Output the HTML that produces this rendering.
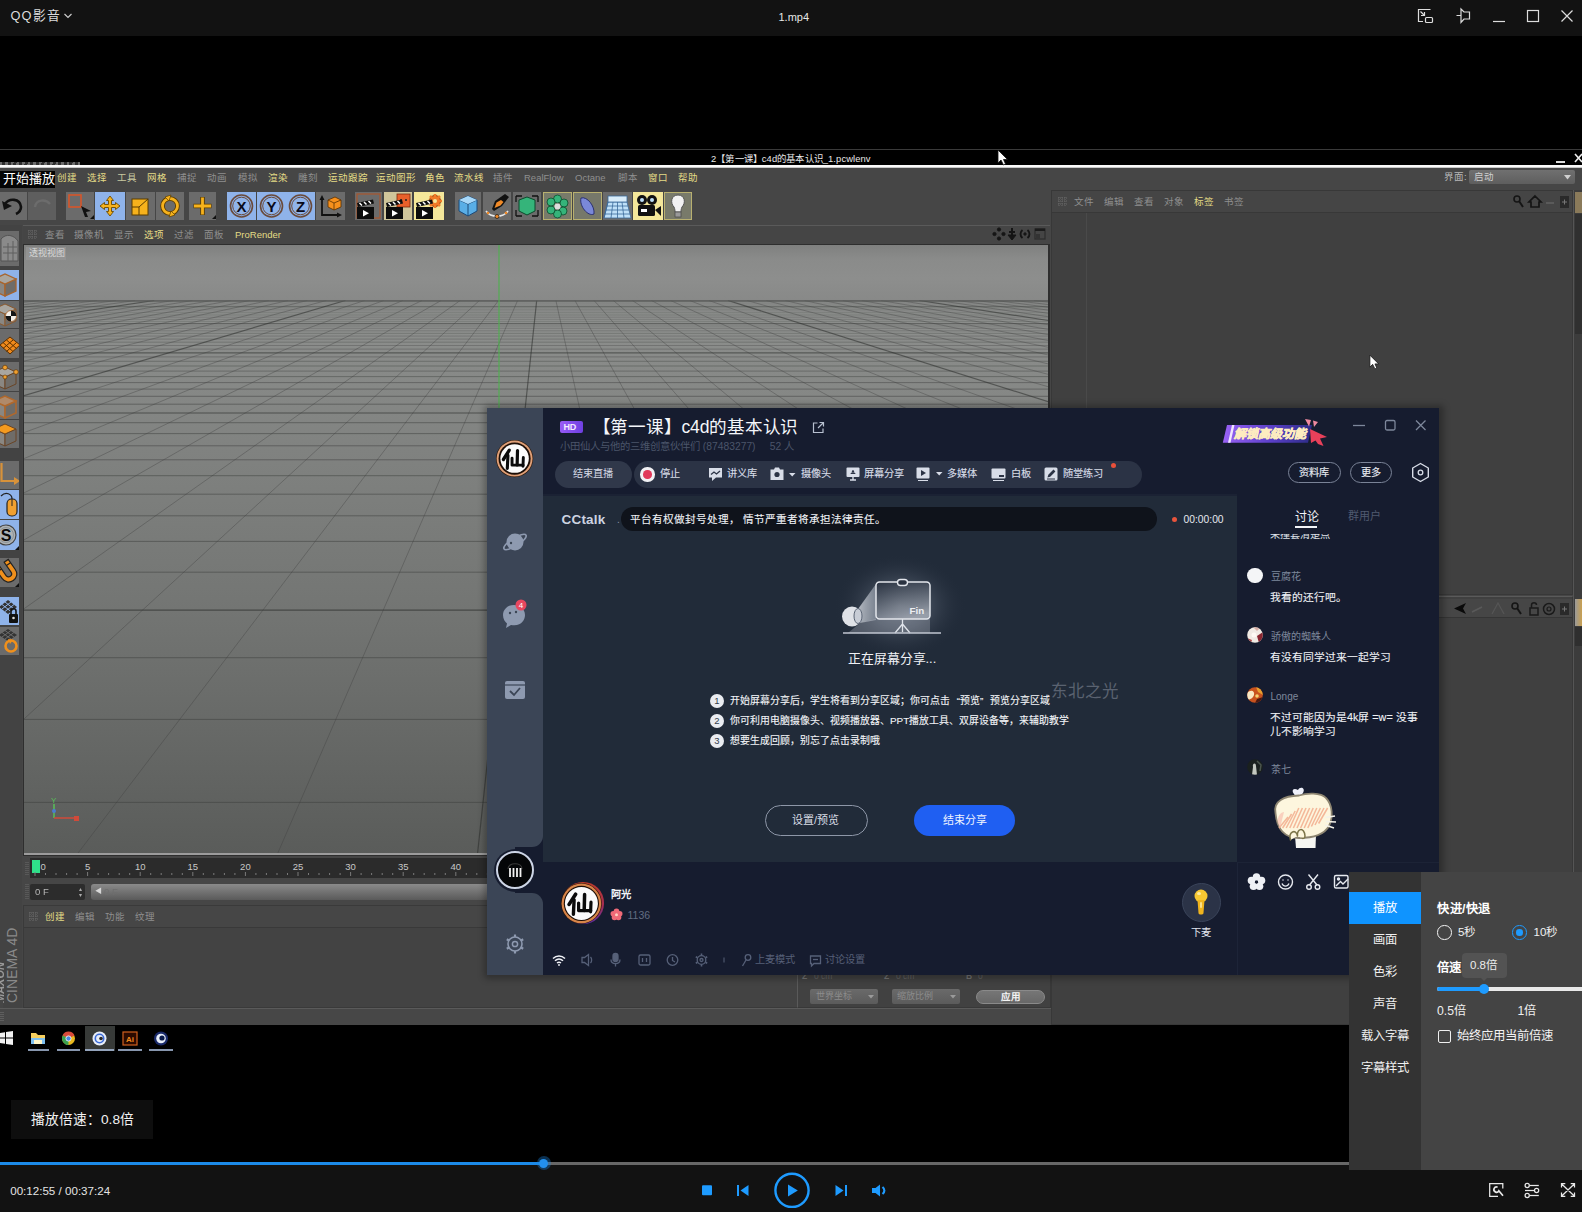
<!DOCTYPE html><html lang="zh-CN"><head><meta charset="utf-8"><title>QQ影音</title><style>
*{box-sizing:border-box;margin:0;padding:0}
html,body{width:1582px;height:1212px;overflow:hidden;background:#000}
body{font-family:"Liberation Sans",sans-serif;position:relative;color:#ddd}
.a{position:absolute}
.t{position:absolute;white-space:nowrap;line-height:1}
</style></head><body>
<div class="a" style="left:0px;top:0px;width:1582px;height:36px;background:#121212"></div>
<div class="t" style="left:10.5px;top:10px;font-size:12.8px;color:#dcdcdc;letter-spacing:1.1px">QQ影音</div>
<svg class="a" style="left:63px;top:12px" width="10" height="8" viewBox="0 0 10 8"><path d="M1.5 2 L5 5.5 L8.5 2" fill="none" stroke="#ccc" stroke-width="1.2"/></svg>
<div class="t" style="left:778.5px;top:12px;font-size:11px;color:#e6e6e6;">1.mp4</div>
<svg class="a" style="left:1410px;top:4px" width="172" height="28" viewBox="1410 4 172 28" fill="none" stroke="#ddd" stroke-width="1.2">
<path d="M1430.5 9.5 H1418.5 V21.5 H1423"/><rect x="1425.5" y="17.500" width="7" height="5" rx="1"/><path d="M1420.500 11.500 L1424.500 15.500 M1424.500 12 V15.500 H1421"/>
<path d="M1456.500 15.500 H1461 M1461 9 V22.500 L1464 19 H1469.500 V12 H1464 Z"/>
<path d="M1493 21.500 H1505"/>
<rect x="1527.500" y="10.500" width="11" height="11"/>
<path d="M1561.500 10.500 L1572.500 21.500 M1572.500 10.500 L1561.500 21.500"/>
</svg>
<div class="a" style="left:0;top:0;width:1582px;height:1212px;filter:blur(.6px)">
<div class="a" style="left:0px;top:148px;width:1582px;height:877px;background:#464646"></div>
<div class="a" style="left:0px;top:148px;width:1582px;height:18px;background:#000"></div>
<div class="a" style="left:0px;top:149px;width:1582px;height:1px;background:#3a3a3a"></div>
<div class="a" style="left:0px;top:164.5px;width:1582px;height:3.5px;background:linear-gradient(#fafafa 65%,#9a9a9a)"></div>
<div class="a" style="left:0px;top:161.5px;width:80px;height:4px;background:repeating-linear-gradient(100deg,rgba(255,255,255,.42) 0 2.500px,rgba(255,255,255,.18) 2.500px 5.500px);filter:blur(.6px)"></div>
<div class="t" style="left:711px;top:153.5px;font-size:9.4px;color:#e8e8e8;letter-spacing:.1px">2【第一课】c4d的基本认识_1.pcwlenv</div>
<div class="a" style="left:1556px;top:161px;width:9px;height:2px;background:#ddd"></div>
<svg class="a" style="left:1574px;top:153px" width="8" height="10"><path d="M1 1L8 9M8 1L1 9" stroke="#eee" stroke-width="1.6"/></svg>
<svg class="a" style="left:997px;top:149px" width="12" height="18" viewBox="0 0 12 18"><path d="M1 1V14L4 11L6.500 16L8.500 15L6.500 10.500H10.500Z" fill="#fff" stroke="#111" stroke-width="0.8"/></svg>
<div class="t" style="left:57px;top:173px;font-size:9.5px;color:#e4dc86;">创建</div>
<div class="t" style="left:87px;top:173px;font-size:9.5px;color:#e4dc86;">选择</div>
<div class="t" style="left:117px;top:173px;font-size:9.5px;color:#c9c9a0;">工具</div>
<div class="t" style="left:147px;top:173px;font-size:9.5px;color:#e4dc86;">网格</div>
<div class="t" style="left:177px;top:173px;font-size:9.5px;color:#8f8f8f;">捕捉</div>
<div class="t" style="left:207px;top:173px;font-size:9.5px;color:#8f8f8f;">动画</div>
<div class="t" style="left:238px;top:173px;font-size:9.5px;color:#8f8f8f;">模拟</div>
<div class="t" style="left:268px;top:173px;font-size:9.5px;color:#e4dc86;">渲染</div>
<div class="t" style="left:298px;top:173px;font-size:9.5px;color:#8f8f8f;">雕刻</div>
<div class="t" style="left:328px;top:173px;font-size:9.5px;color:#e4dc86;">运动跟踪</div>
<div class="t" style="left:376px;top:173px;font-size:9.5px;color:#e4dc86;">运动图形</div>
<div class="t" style="left:425px;top:173px;font-size:9.5px;color:#e4dc86;">角色</div>
<div class="t" style="left:454px;top:173px;font-size:9.5px;color:#e4dc86;">流水线</div>
<div class="t" style="left:493px;top:173px;font-size:9.5px;color:#8f8f8f;">插件</div>
<div class="t" style="left:524px;top:173px;font-size:9.5px;color:#8f8f8f;">RealFlow</div>
<div class="t" style="left:575px;top:173px;font-size:9.5px;color:#8f8f8f;">Octane</div>
<div class="t" style="left:618px;top:173px;font-size:9.5px;color:#8f8f8f;">脚本</div>
<div class="t" style="left:648px;top:173px;font-size:9.5px;color:#e4dc86;">窗口</div>
<div class="t" style="left:678px;top:173px;font-size:9.5px;color:#e4dc86;">帮助</div>
<div class="a" style="left:0px;top:171px;width:55px;height:17px;background:#050505"></div>
<div class="t" style="left:3px;top:172px;font-size:13px;color:#fff;">开始播放</div>
<div class="t" style="left:1444px;top:172px;font-size:9.5px;color:#b8b8b8;">界面:</div>
<div class="a" style="left:1469px;top:170px;width:106px;height:14px;background:linear-gradient(#707070,#5e5e5e);border-radius:2px"></div>
<div class="t" style="left:1474px;top:172px;font-size:9.5px;color:#d0d0d0;">启动</div>
<svg class="a" style="left:1564px;top:175px" width="7" height="5"><path d="M0 0H7L3.500 4.500Z" fill="#d0d0d0"/></svg>
<div class="a" style="left:0px;top:192px;width:27px;height:28px;background:#6b6b6b;overflow:hidden"><svg width="27" height="28" viewBox="0 0 27 28"><path d="M5 12C9 6 20 6 21 15C21 19 18 21 16 22" fill="none" stroke="#111" stroke-width="2.6"/><path d="M2 9L4 18L12 14Z" fill="#111"/></svg></div>
<div class="a" style="left:28px;top:192px;width:28px;height:28px;background:#5e5e5e;overflow:hidden"><svg width="28" height="28" viewBox="0 0 28 28"><path d="M22 12C18 7 8 7 7 15" fill="none" stroke="#6c6c6c" stroke-width="2.4"/></svg></div>
<div class="a" style="left:66px;top:192px;width:28px;height:28px;background:#6b6b6b;overflow:hidden"><svg width="28" height="28" viewBox="0 0 28 28"><rect x="3" y="3" width="12" height="12" fill="none" stroke="#d8562a" stroke-width="1.6"/><path d="M15 14L25 19L20 20L22 25L19 25Z" fill="#111"/><path d="M24 27H28V23Z" fill="#111"/></svg></div>
<div class="a" style="left:95px;top:192px;width:30px;height:28px;background:#8fb3ea;overflow:hidden"><svg width="30" height="28" viewBox="0 0 30 28"><g transform="translate(1,0)"><path d="M14 4L17.500 8.500H15.500V12.500H19.500V10.500L24 14L19.500 17.500V15.500H15.500V19.500H17.500L14 24L10.500 19.500H12.500V15.500H8.500V17.500L4 14L8.500 10.500V12.500H12.500V8.500H10.500Z" fill="#f7b21c" stroke="#6a4a00" stroke-width="0.9"/></g></svg></div>
<div class="a" style="left:126px;top:192px;width:29px;height:28px;background:#6b6b6b;overflow:hidden"><svg width="29" height="28" viewBox="0 0 29 28"><rect x="6" y="7" width="16" height="16" fill="#f7b21c" stroke="#5a3c00" stroke-width="1"/><path d="M6 15H13V23M13 15L22 7" stroke="#5a3c00" stroke-width="1" fill="none"/></svg></div>
<div class="a" style="left:156px;top:192px;width:28px;height:28px;background:#6b6b6b;overflow:hidden"><svg width="28" height="28" viewBox="0 0 28 28"><circle cx="14" cy="14" r="7.500" fill="none" stroke="#5a3c00" stroke-width="4.600"/><circle cx="14" cy="14" r="7.500" fill="none" stroke="#f7b21c" stroke-width="2.800"/><path d="M9 5L15 3L13 9Z M19 23L13 25L15 19Z" fill="#f7b21c" stroke="#5a3c00" stroke-width=".7"/></svg></div>
<div class="a" style="left:189px;top:192px;width:27px;height:28px;background:#6b6b6b;overflow:hidden"><svg width="27" height="28" viewBox="0 0 27 28"><path d="M13.500 5V23M4.500 14H22.500" stroke="#5a3c00" stroke-width="4.600"/><path d="M13.500 5.500V22.500M5 14H22" stroke="#f7b21c" stroke-width="2.800"/><path d="M23 27H27V23Z" fill="#111"/></svg></div>
<div class="a" style="left:227px;top:192px;width:29px;height:28px;background:#8fb3ea;overflow:hidden"><svg width="29" height="28" viewBox="0 0 29 28"><circle cx="14.500" cy="14" r="11" fill="none" stroke="#6a4a3a" stroke-width="1.6"/><circle cx="14.500" cy="14" r="8.800" fill="none" stroke="#6a4a3a" stroke-width="1"/><text x="14.500" y="19.500" text-anchor="middle" font-family="Liberation Sans, sans-serif" font-weight="bold" font-size="15" fill="#0a0a1a">X</text></svg></div>
<div class="a" style="left:256.5px;top:192px;width:29px;height:28px;background:#8fb3ea;overflow:hidden"><svg width="29" height="28" viewBox="0 0 29 28"><circle cx="14.500" cy="14" r="11" fill="none" stroke="#6a4a3a" stroke-width="1.6"/><circle cx="14.500" cy="14" r="8.800" fill="none" stroke="#6a4a3a" stroke-width="1"/><text x="14.500" y="19.500" text-anchor="middle" font-family="Liberation Sans, sans-serif" font-weight="bold" font-size="15" fill="#0a0a1a">Y</text></svg></div>
<div class="a" style="left:286px;top:192px;width:29px;height:28px;background:#8fb3ea;overflow:hidden"><svg width="29" height="28" viewBox="0 0 29 28"><circle cx="14.500" cy="14" r="11" fill="none" stroke="#6a4a3a" stroke-width="1.6"/><circle cx="14.500" cy="14" r="8.800" fill="none" stroke="#6a4a3a" stroke-width="1"/><text x="14.500" y="19.500" text-anchor="middle" font-family="Liberation Sans, sans-serif" font-weight="bold" font-size="15" fill="#0a0a1a">Z</text></svg></div>
<div class="a" style="left:316px;top:192px;width:29px;height:28px;background:#6b6b6b;overflow:hidden"><svg width="29" height="28" viewBox="0 0 29 28"><path d="M6 6V23H23" fill="none" stroke="#111" stroke-width="1.800"/><path d="M6 3L3.500 8H8.500ZM26 23L21 20.500V25.500Z" fill="#111"/><path d="M12 8L19 5L25 8V15L18 18L12 15Z" fill="#f7901c" stroke="#5a3000" stroke-width=".8"/><path d="M12 8L18 11L25 8M18 11V18" fill="none" stroke="#5a3000" stroke-width=".8"/></svg></div>
<div class="a" style="left:355px;top:192px;width:27px;height:28px;background:#6b6b6b;overflow:hidden"><svg width="27" height="28" viewBox="0 0 27 28"><rect x="2" y="2" width="23" height="24" fill="none" stroke="#a9562e" stroke-width="1.2"/><rect x="2" y="15" width="17" height="12" fill="#0c0c0c"/><path d="M2 11L18 7.500L19 11.500L3 15Z" fill="#0c0c0c"/><path d="M4.500 11L7 13.500M9 10L11.500 12.500M13.500 9L16 11.500" stroke="#fff" stroke-width="1.500"/><path d="M8 18V24.500L14 21.200Z" fill="#fff"/></svg></div>
<div class="a" style="left:384px;top:192px;width:28px;height:28px;background:#cfc59a;overflow:hidden"><svg width="28" height="28" viewBox="0 0 28 28"><rect x="13" y="2" width="13" height="13" fill="#e8602a" stroke="#7a2a0a" stroke-width=".8"/><circle cx="17" cy="8" r="1" fill="#222"/><circle cx="22" cy="8" r="1" fill="#222"/><rect x="2" y="15" width="17" height="12" fill="#0c0c0c"/><path d="M2 11L18 7.500L19 11.500L3 15Z" fill="#0c0c0c"/><path d="M4.500 11L7 13.500M9 10L11.500 12.500M13.500 9L16 11.500" stroke="#fff" stroke-width="1.500"/><path d="M8 18V24.500L14 21.200Z" fill="#fff"/></svg></div>
<div class="a" style="left:414px;top:192px;width:30px;height:28px;background:#f4e79a;overflow:hidden"><svg width="30" height="28" viewBox="0 0 30 28"><circle cx="21" cy="9" r="5.500" fill="#f07a28" stroke="#7a3000" stroke-width="1"/><path d="M21 2V16M14 9H28M16 4L26 14M26 4L16 14" stroke="#f07a28" stroke-width="2.600"/><circle cx="21" cy="9" r="2" fill="#f4e79a"/><rect x="2" y="15" width="17" height="12" fill="#0c0c0c"/><path d="M2 11L18 7.500L19 11.500L3 15Z" fill="#0c0c0c"/><path d="M4.500 11L7 13.500M9 10L11.500 12.500M13.500 9L16 11.500" stroke="#fff" stroke-width="1.500"/><path d="M8 18V24.500L14 21.200Z" fill="#fff"/></svg></div>
<div class="a" style="left:455px;top:192px;width:26px;height:28px;background:#6b6b6b;overflow:hidden"><svg width="26" height="28" viewBox="0 0 26 28"><path d="M13 4L22 8V19L13 24L4 19V8Z" fill="#59aee6" stroke="#1d4a78" stroke-width="1"/><path d="M4 8L13 12L22 8M13 12V24" fill="none" stroke="#1d4a78" stroke-width="1"/><path d="M4 8L13 4L22 8L13 12Z" fill="#a8d8f8"/></svg></div>
<div class="a" style="left:483px;top:192px;width:28px;height:28px;background:#6b6b6b;overflow:hidden"><svg width="28" height="28" viewBox="0 0 28 28"><path d="M9 17L12 9L22 2L26 5L19 14L11 19Z" fill="#111"/><path d="M11.500 16L13.500 10.500L18 8L20.500 10L17.500 13.500Z" fill="#f08a28"/><path d="M3 19C8 26 20 26 25 19" fill="none" stroke="#e8e8e8" stroke-width="1.600"/><circle cx="14" cy="24.500" r="2" fill="#f08a28" stroke="#111" stroke-width=".7"/><circle cx="5" cy="21" r="1.300" fill="#f08a28"/><circle cx="23" cy="21" r="1.300" fill="#f08a28"/></svg></div>
<div class="a" style="left:513px;top:192px;width:28px;height:28px;background:#6b6b6b;overflow:hidden"><svg width="28" height="28" viewBox="0 0 28 28"><path d="M14 5L22 8V19L14 23L6 19V8Z" fill="#35b47a" stroke="#0c4a2c" stroke-width="1"/><path d="M3 4V10M3 4H9M25 4V10M25 4H19M3 24V18M3 24H9M25 24V18M25 24H19" stroke="#111" stroke-width="1.300" fill="none"/></svg></div>
<div class="a" style="left:543px;top:192px;width:29px;height:28px;background:#787a6a;overflow:hidden"><svg width="29" height="28" viewBox="0 0 29 28"><rect x=".5" y=".5" width="28" height="27" fill="none" stroke="#b8b070" stroke-width="1"/><g fill="#35b47a" stroke="#0c4a2c" stroke-width=".8"><circle cx="14.500" cy="7" r="4"/><circle cx="21" cy="11" r="4"/><circle cx="20" cy="19" r="4"/><circle cx="14.500" cy="22" r="4"/><circle cx="8" cy="18" r="4"/><circle cx="8" cy="10" r="4"/></g><circle cx="14.500" cy="14.500" r="3" fill="#ddd"/></svg></div>
<div class="a" style="left:573px;top:192px;width:29px;height:28px;background:#76786a;overflow:hidden"><svg width="29" height="28" viewBox="0 0 29 28"><rect x=".5" y=".5" width="28" height="27" fill="none" stroke="#b8b070" stroke-width="1"/><path d="M8 6C14 4 22 14 21 22C15 25 6 14 8 6Z" fill="#7a88d8" stroke="#2a3070" stroke-width="1"/></svg></div>
<div class="a" style="left:603px;top:192px;width:29px;height:28px;background:#6b6b6b;overflow:hidden"><svg width="29" height="28" viewBox="0 0 29 28"><path d="M5 10H24L28 26H1Z" fill="#bfe0f8" stroke="#3a6a9a" stroke-width=".8"/><path d="M1 26L5 10M8 26L10 10M14.500 26V10M21 26L19 10M3 18H26M4 14H25M2 22H27" stroke="#3a6a9a" stroke-width=".8" fill="none"/><rect x="5" y="4" width="19" height="6" fill="#d8ecfa" stroke="#3a6a9a" stroke-width=".8"/></svg></div>
<div class="a" style="left:633px;top:192px;width:30px;height:28px;background:#f4e79a;overflow:hidden"><svg width="30" height="28" viewBox="0 0 30 28"><circle cx="9" cy="8" r="5" fill="#111"/><circle cx="19" cy="8" r="5" fill="#111"/><circle cx="9" cy="8" r="2" fill="#bfe0f8"/><circle cx="19" cy="8" r="2" fill="#bfe0f8"/><rect x="5" y="13" width="17" height="11" rx="1.500" fill="#111"/><path d="M22 18L28 14V24Z" fill="#111"/><rect x="8" y="17" width="6" height="3" fill="#fff"/></svg></div>
<div class="a" style="left:664px;top:192px;width:28px;height:28px;background:#787a6a;overflow:hidden"><svg width="28" height="28" viewBox="0 0 28 28"><rect x=".5" y=".5" width="27" height="27" fill="none" stroke="#b8b070" stroke-width="1"/><path d="M14 3C7 3 6 11 10 15C11 17 11 19 11 20H17C17 19 17 17 18 15C22 11 21 3 14 3Z" fill="#f2f2f2" stroke="#555" stroke-width="1"/><rect x="11" y="20" width="6" height="5" fill="#999" stroke="#444" stroke-width=".7"/></svg></div>
<div class="a" style="left:0px;top:225px;width:22px;height:800px;background:#434343"></div>
<div class="a" style="left:0px;top:231px;width:19px;height:35px;background:#6b6b6b;overflow:hidden"><svg width="19" height="35" viewBox="0 0 19 35"><path d="M1 8C6 2 14 4 18 10V30H1Z" fill="#8a8a8a" stroke="#555" stroke-width="1"/><path d="M3 22H17M3 16H17M8 12V30M13 10V30" stroke="#5e5e5e" stroke-width="1"/></svg></div>
<div class="a" style="left:0px;top:270px;width:19px;height:30px;background:#8fb3ea;overflow:hidden"><svg width="19" height="30" viewBox="0 0 19 30"><path d="M-6 9L5 14V26L-6 21Z" fill="#8a8782" stroke="#a8642c" stroke-width="1.3"/><path d="M5 14L16 9V21L5 26Z" fill="#6f6c68" stroke="#a8642c" stroke-width="1.3"/><path d="M-6 9L5 4L16 9L5 14Z" fill="#a9a6a0" stroke="#a8642c" stroke-width="1.3"/></svg></div>
<div class="a" style="left:0px;top:301px;width:19px;height:27px;background:#6b6b6b;overflow:hidden"><svg width="19" height="27" viewBox="0 0 19 27"><path d="M-6 8L5 13V25L-6 20Z" fill="#8a8782" stroke="#8a5a30" stroke-width="1"/><path d="M5 13L16 8V20L5 25Z" fill="#6f6c68" stroke="#8a5a30" stroke-width="1"/><path d="M-6 8L5 3L16 8L5 13Z" fill="#a9a6a0" stroke="#8a5a30" stroke-width="1"/><circle cx="11" cy="15" r="5.500" fill="#f4f0ea" stroke="#a8642c" stroke-width=".8"/><path d="M11 15V9.500A5.500 5.500 0 0 1 16.500 15ZM11 15V20.500A5.500 5.500 0 0 1 5.500 15Z" fill="#151515"/></svg></div>
<div class="a" style="left:0px;top:329px;width:19px;height:29px;background:#6b6b6b;overflow:hidden"><svg width="19" height="29" viewBox="0 0 19 29"><path d="M0 16L10 8L20 16L10 25Z" fill="#f08a1c" stroke="#5a3000" stroke-width="1"/><path d="M3 13.500L13 22.500M6.500 11L16.500 19.500M16.500 13.500L6.500 22.500M13 11L3 19.500" stroke="#5a3000" stroke-width="1"/></svg></div>
<div class="a" style="left:0px;top:362px;width:19px;height:29px;background:#6b6b6b;overflow:hidden"><svg width="19" height="29" viewBox="0 0 19 29"><path d="M-6 10L5 15V27L-6 22Z" fill="#8a8782" stroke="#6a4526" stroke-width="1"/><path d="M5 15L16 10V22L5 27Z" fill="#6f6c68" stroke="#6a4526" stroke-width="1"/><path d="M-6 10L5 5L16 10L5 15Z" fill="#a9a6a0" stroke="#6a4526" stroke-width="1"/><circle cx="5" cy="5.500" r="2.300" fill="#f0a030" stroke="#5a3000" stroke-width=".6"/><circle cx="16" cy="10" r="2.300" fill="#f0a030" stroke="#5a3000" stroke-width=".6"/><circle cx="5" cy="15" r="2" fill="#f0a030" stroke="#5a3000" stroke-width=".6"/></svg></div>
<div class="a" style="left:0px;top:392px;width:19px;height:27px;background:#6b6b6b;overflow:hidden"><svg width="19" height="27" viewBox="0 0 19 27"><path d="M-6 9L5 14V26L-6 21Z" fill="#8a8782" stroke="#b0682c" stroke-width="1.5"/><path d="M5 14L16 9V21L5 26Z" fill="#6f6c68" stroke="#b0682c" stroke-width="1.5"/><path d="M-6 9L5 4L16 9L5 14Z" fill="#b08a6a" stroke="#b0682c" stroke-width="1.5"/></svg></div>
<div class="a" style="left:0px;top:420px;width:19px;height:28px;background:#6b6b6b;overflow:hidden"><svg width="19" height="28" viewBox="0 0 19 28"><path d="M-6 9L5 14V26L-6 21Z" fill="#8a8782" stroke="#6a4526" stroke-width="1"/><path d="M5 14L16 9V21L5 26Z" fill="#6f6c68" stroke="#6a4526" stroke-width="1"/><path d="M-6 9L5 4L16 9L5 14Z" fill="#f59a1e" stroke="#6a4526" stroke-width="1"/></svg></div>
<div class="a" style="left:0px;top:461px;width:19px;height:28px;background:#6b6b6b;overflow:hidden"><svg width="19" height="28" viewBox="0 0 19 28"><path d="M1.500 2V20H15" fill="none" stroke="#d8923a" stroke-width="2.200"/><path d="M14 16L20 20L14 24Z" fill="#d8923a"/></svg></div>
<div class="a" style="left:0px;top:490px;width:19px;height:29px;background:#8fb3ea;overflow:hidden"><svg width="19" height="29" viewBox="0 0 19 29"><path d="M1 6C6 1 12 4 12 9" fill="none" stroke="#222" stroke-width="1.300"/><rect x="7" y="9" width="10" height="17" rx="4.500" fill="#f0a030" stroke="#222" stroke-width="1.200"/><path d="M12 9V16" stroke="#222" stroke-width="1"/></svg></div>
<div class="a" style="left:0px;top:520px;width:19px;height:30px;background:#8fb3ea;overflow:hidden"><svg width="19" height="30" viewBox="0 0 19 30"><circle cx="6" cy="15" r="10" fill="#aeb2b4" stroke="#444" stroke-width="1.200"/><circle cx="6" cy="15" r="7.500" fill="none" stroke="#8a9298" stroke-width="1"/><text x="6" y="21" text-anchor="middle" font-family="Liberation Sans, sans-serif" font-weight="bold" font-size="16" fill="#0a0a0a">S</text><path d="M15 30H19V26Z" fill="#111"/></svg></div>
<div class="a" style="left:0px;top:558px;width:19px;height:29px;background:#6b6b6b;overflow:hidden"><svg width="19" height="29" viewBox="0 0 19 29"><g transform="rotate(-35 8 15)"><path d="M0 4V16C0 27 16 27 16 16V4H11V16C11 20 5 20 5 16V4Z" fill="#f0901c" stroke="#222" stroke-width="1.200"/><path d="M0 8H5M11 8H16" stroke="#222" stroke-width="1.200"/></g><path d="M15 29H19V25Z" fill="#111"/></svg></div>
<div class="a" style="left:0px;top:597px;width:19px;height:28px;background:#8fb3ea;overflow:hidden"><svg width="19" height="28" viewBox="0 0 19 28"><path d="M-1 10L8 3L17 10L8 17Z" fill="#333"/><path d="M2 7.500L11 14.500M5 5L14 12M14 7.500L5 14.500M11 5L2 12" stroke="#8fb3ea" stroke-width="1"/><rect x="9" y="17" width="9" height="9" rx="1" fill="#111"/><path d="M11 17V14C11 11 16 11 16 14V17" fill="none" stroke="#111" stroke-width="1.600"/><circle cx="13.500" cy="21" r="1.300" fill="#ddd"/></svg></div>
<div class="a" style="left:0px;top:627px;width:19px;height:28px;background:#6b6b6b;overflow:hidden"><svg width="19" height="28" viewBox="0 0 19 28"><path d="M-1 8L8 2L17 8L8 14Z" fill="#333"/><path d="M2 5.500L11 12M5 3.500L14 10M14 5.500L5 12M11 3.500L2 10" stroke="#6b6b6b" stroke-width="1"/><circle cx="11" cy="19" r="5.500" fill="none" stroke="#f0901c" stroke-width="2.600"/><path d="M8 12L13 13L10 17Z" fill="#f0901c"/></svg></div>
<div class="t" style="left:5px;top:1003px;transform-origin:0 0;transform:rotate(-90deg);font-size:14px;color:#8a8a8a;letter-spacing:0px">CINEMA 4D</div>
<div class="t" style="left:-5px;top:1003px;transform-origin:0 0;transform:rotate(-90deg);font-size:11px;font-weight:bold;font-style:italic;color:#9a9a9a">MAXON</div>
<div class="a" style="left:0px;top:1000px;width:3px;height:24px;background:#464646"></div>
<div class="a" style="left:23px;top:224.5px;width:1027px;height:20.5px;background:#454545;border-top:1px solid #5a5a5a"></div>
<svg class="a" style="left:28px;top:230px" width="10" height="10"><path d="M1 0V10M4 0V10M7 0V10M0 1H10M0 4H10M0 7H10" stroke="#6a6a6a" stroke-width="1" stroke-dasharray="1 1"/></svg>
<div class="t" style="left:45px;top:230px;font-size:9.5px;color:#8f8f8f;">查看</div>
<div class="t" style="left:74px;top:230px;font-size:9.5px;color:#8f8f8f;">摄像机</div>
<div class="t" style="left:114px;top:230px;font-size:9.5px;color:#8f8f8f;">显示</div>
<div class="t" style="left:144px;top:230px;font-size:9.5px;color:#e4dc86;">选项</div>
<div class="t" style="left:174px;top:230px;font-size:9.5px;color:#8f8f8f;">过滤</div>
<div class="t" style="left:204px;top:230px;font-size:9.5px;color:#8f8f8f;">面板</div>
<div class="t" style="left:235px;top:230px;font-size:9.5px;color:#e4dc86;">ProRender</div>
<svg class="a" style="left:992px;top:227px" width="56" height="14" viewBox="0 0 56 14"><g fill="#151515" stroke="#151515"><circle cx="7" cy="2.500" r="1.600"/><circle cx="7" cy="11.500" r="1.600"/><circle cx="2.500" cy="7" r="1.600"/><circle cx="11.500" cy="7" r="1.600"/><path d="M20 1V9M17 5H23" stroke-width="2" fill="none"/><path d="M20 13L16 8H24Z"/><path d="M30.500 3A5 5 0 0 0 30.500 11M35.500 3A5 5 0 0 1 35.500 11" fill="none" stroke-width="1.900"/><circle cx="33" cy="7" r="1.200"/><rect x="43" y="2" width="10" height="10" fill="none" stroke="#2e2e2e" stroke-width="1.300"/><rect x="43" y="1.500" width="10" height="2.500" fill="#1c1c1c" stroke="none"/><rect x="44" y="7" width="4" height="5" fill="#333" stroke="none"/></g></svg>
<div class="a" style="left:23px;top:244px;width:1027px;height:612px;background:#2e2e2e"></div>
<svg class="a" style="left:24px;top:245px" width="1024" height="609" viewBox="0 0 1024 609">
<defs><linearGradient id="sky" x1="0" y1="0" x2="0" y2="1"><stop offset="0" stop-color="#7f807f"/><stop offset="0.25" stop-color="#8a8b8a"/><stop offset="0.6" stop-color="#8d8e8d"/><stop offset="1" stop-color="#888988"/></linearGradient><linearGradient id="gnd" x1="0" y1="0" x2="0" y2="1"><stop offset="0" stop-color="#8f918f"/><stop offset="0.12" stop-color="#888a88"/><stop offset="0.27" stop-color="#808280"/><stop offset="0.54" stop-color="#747674"/><stop offset="0.81" stop-color="#656765"/><stop offset="1" stop-color="#5a5c5a"/></linearGradient><clipPath id="gc"><rect x="0" y="55.5" width="1024" height="553.5"/></clipPath></defs>
<rect x="0" y="0" width="1024" height="55.5" fill="url(#sky)"/>
<rect x="0" y="55.5" width="1024" height="553.5" fill="url(#gnd)"/>
<g clip-path="url(#gc)" fill="none">
<path d="M0 557.4H1024" stroke="#3c3e3c" stroke-opacity="0.50" stroke-width="1"/>
<path d="M0 474.4H1024" stroke="#3c3e3c" stroke-opacity="0.50" stroke-width="1"/>
<path d="M0 412.7H1024" stroke="#3c3e3c" stroke-opacity="0.50" stroke-width="1"/>
<path d="M0 327.2H1024" stroke="#3c3e3c" stroke-opacity="0.50" stroke-width="1"/>
<path d="M0 296.4H1024" stroke="#3c3e3c" stroke-opacity="0.50" stroke-width="1"/>
<path d="M0 270.8H1024" stroke="#3c3e3c" stroke-opacity="0.50" stroke-width="1"/>
<path d="M0 249.2H1024" stroke="#3c3e3c" stroke-opacity="0.50" stroke-width="1"/>
<path d="M0 230.7H1024" stroke="#3c3e3c" stroke-opacity="0.50" stroke-width="1"/>
<path d="M0 214.8H1024" stroke="#3c3e3c" stroke-opacity="0.50" stroke-width="1"/>
<path d="M0 200.8H1024" stroke="#3c3e3c" stroke-opacity="0.50" stroke-width="1"/>
<path d="M0 188.6H1024" stroke="#3c3e3c" stroke-opacity="0.50" stroke-width="1"/>
<path d="M0 177.7H1024" stroke="#3c3e3c" stroke-opacity="0.50" stroke-width="1"/>
<path d="M0 159.2H1024" stroke="#3c3e3c" stroke-opacity="0.50" stroke-width="1"/>
<path d="M0 151.3H1024" stroke="#3c3e3c" stroke-opacity="0.50" stroke-width="1"/>
<path d="M0 144.1H1024" stroke="#3c3e3c" stroke-opacity="0.48" stroke-width="1"/>
<path d="M0 137.6H1024" stroke="#3c3e3c" stroke-opacity="0.46" stroke-width="1"/>
<path d="M0 131.6H1024" stroke="#3c3e3c" stroke-opacity="0.43" stroke-width="1"/>
<path d="M0 126.1H1024" stroke="#3c3e3c" stroke-opacity="0.41" stroke-width="1"/>
<path d="M0 121.0H1024" stroke="#3c3e3c" stroke-opacity="0.39" stroke-width="1"/>
<path d="M0 116.3H1024" stroke="#3c3e3c" stroke-opacity="0.37" stroke-width="1"/>
<path d="M0 111.9H1024" stroke="#3c3e3c" stroke-opacity="0.36" stroke-width="1"/>
<path d="M0 104.1H1024" stroke="#3c3e3c" stroke-opacity="0.33" stroke-width="1"/>
<path d="M0 100.5H1024" stroke="#3c3e3c" stroke-opacity="0.31" stroke-width="1"/>
<path d="M0 97.2H1024" stroke="#3c3e3c" stroke-opacity="0.30" stroke-width="1"/>
<path d="M0 94.1H1024" stroke="#3c3e3c" stroke-opacity="0.29" stroke-width="1"/>
<path d="M0 91.1H1024" stroke="#3c3e3c" stroke-opacity="0.28" stroke-width="1"/>
<path d="M0 88.4H1024" stroke="#3c3e3c" stroke-opacity="0.27" stroke-width="1"/>
<path d="M0 85.8H1024" stroke="#3c3e3c" stroke-opacity="0.26" stroke-width="1"/>
<path d="M0 83.3H1024" stroke="#3c3e3c" stroke-opacity="0.25" stroke-width="1"/>
<path d="M0 81.0H1024" stroke="#3c3e3c" stroke-opacity="0.24" stroke-width="1"/>
<path d="M0 76.6H1024" stroke="#3c3e3c" stroke-opacity="0.22" stroke-width="1"/>
<path d="M0 74.6H1024" stroke="#3c3e3c" stroke-opacity="0.21" stroke-width="1"/>
<path d="M0 72.7H1024" stroke="#3c3e3c" stroke-opacity="0.21" stroke-width="1"/>
<path d="M0 70.9H1024" stroke="#3c3e3c" stroke-opacity="0.20" stroke-width="1"/>
<path d="M0 69.2H1024" stroke="#3c3e3c" stroke-opacity="0.19" stroke-width="1"/>
<path d="M0 67.5H1024" stroke="#3c3e3c" stroke-opacity="0.19" stroke-width="1"/>
<path d="M0 65.9H1024" stroke="#3c3e3c" stroke-opacity="0.18" stroke-width="1"/>
<path d="M0 64.4H1024" stroke="#3c3e3c" stroke-opacity="0.17" stroke-width="1"/>
<path d="M0 63.0H1024" stroke="#3c3e3c" stroke-opacity="0.17" stroke-width="1"/>
<path d="M0 60.2H1024" stroke="#3c3e3c" stroke-opacity="0.16" stroke-width="1"/>
<path d="M0 58.9H1024" stroke="#3c3e3c" stroke-opacity="0.15" stroke-width="1"/>
<path d="M0 57.7H1024" stroke="#3c3e3c" stroke-opacity="0.15" stroke-width="1"/>
<path d="M0 56.5H1024" stroke="#3c3e3c" stroke-opacity="0.14" stroke-width="1"/>
<path d="M0 365.1H1024" stroke="#2a2c2a" stroke-opacity="0.60" stroke-width="1.2"/>
<path d="M0 168.0H1024" stroke="#2a2c2a" stroke-opacity="0.60" stroke-width="1.2"/>
<path d="M0 107.8H1024" stroke="#2a2c2a" stroke-opacity="0.54" stroke-width="1.2"/>
<path d="M0 78.7H1024" stroke="#2a2c2a" stroke-opacity="0.43" stroke-width="1.2"/>
<path d="M0 61.6H1024" stroke="#2a2c2a" stroke-opacity="0.36" stroke-width="1.2"/>
<path d="M15.4 55.5L-4749.7 609" stroke="#3c3e3c" stroke-opacity="0.36" stroke-width="1"/>
<path d="M34.5 55.5L-4549.6 609" stroke="#3c3e3c" stroke-opacity="0.36" stroke-width="1"/>
<path d="M53.6 55.5L-4349.5 609" stroke="#3c3e3c" stroke-opacity="0.36" stroke-width="1"/>
<path d="M72.8 55.5L-4149.3 609" stroke="#3c3e3c" stroke-opacity="0.36" stroke-width="1"/>
<path d="M91.9 55.5L-3949.2 609" stroke="#3c3e3c" stroke-opacity="0.36" stroke-width="1"/>
<path d="M111.0 55.5L-3749.1 609" stroke="#3c3e3c" stroke-opacity="0.36" stroke-width="1"/>
<path d="M130.2 55.5L-3549.0 609" stroke="#2a2c2a" stroke-opacity="0.55" stroke-width="1.2"/>
<path d="M149.3 55.5L-3348.8 609" stroke="#3c3e3c" stroke-opacity="0.36" stroke-width="1"/>
<path d="M168.4 55.5L-3148.7 609" stroke="#3c3e3c" stroke-opacity="0.36" stroke-width="1"/>
<path d="M187.5 55.5L-2948.6 609" stroke="#3c3e3c" stroke-opacity="0.36" stroke-width="1"/>
<path d="M206.7 55.5L-2748.5 609" stroke="#3c3e3c" stroke-opacity="0.36" stroke-width="1"/>
<path d="M225.8 55.5L-2548.3 609" stroke="#3c3e3c" stroke-opacity="0.36" stroke-width="1"/>
<path d="M244.9 55.5L-2348.2 609" stroke="#3c3e3c" stroke-opacity="0.36" stroke-width="1"/>
<path d="M264.1 55.5L-2148.1 609" stroke="#3c3e3c" stroke-opacity="0.36" stroke-width="1"/>
<path d="M283.2 55.5L-1948.0 609" stroke="#3c3e3c" stroke-opacity="0.36" stroke-width="1"/>
<path d="M302.3 55.5L-1747.8 609" stroke="#3c3e3c" stroke-opacity="0.36" stroke-width="1"/>
<path d="M321.4 55.5L-1547.7 609" stroke="#2a2c2a" stroke-opacity="0.55" stroke-width="1.2"/>
<path d="M340.6 55.5L-1347.6 609" stroke="#3c3e3c" stroke-opacity="0.36" stroke-width="1"/>
<path d="M359.7 55.5L-1147.5 609" stroke="#3c3e3c" stroke-opacity="0.36" stroke-width="1"/>
<path d="M378.8 55.5L-947.4 609" stroke="#3c3e3c" stroke-opacity="0.36" stroke-width="1"/>
<path d="M398.0 55.5L-747.2 609" stroke="#3c3e3c" stroke-opacity="0.36" stroke-width="1"/>
<path d="M417.1 55.5L-547.1 609" stroke="#3c3e3c" stroke-opacity="0.36" stroke-width="1"/>
<path d="M436.2 55.5L-347.0 609" stroke="#3c3e3c" stroke-opacity="0.36" stroke-width="1"/>
<path d="M455.4 55.5L-146.9 609" stroke="#3c3e3c" stroke-opacity="0.36" stroke-width="1"/>
<path d="M474.5 55.5L53.3 609" stroke="#3c3e3c" stroke-opacity="0.36" stroke-width="1"/>
<path d="M493.6 55.5L253.4 609" stroke="#3c3e3c" stroke-opacity="0.36" stroke-width="1"/>
<path d="M512.7 55.5L453.5 609" stroke="#2a2c2a" stroke-opacity="0.55" stroke-width="1.2"/>
<path d="M531.9 55.5L653.6 609" stroke="#3c3e3c" stroke-opacity="0.36" stroke-width="1"/>
<path d="M551.0 55.5L853.8 609" stroke="#3c3e3c" stroke-opacity="0.36" stroke-width="1"/>
<path d="M570.1 55.5L1053.9 609" stroke="#3c3e3c" stroke-opacity="0.36" stroke-width="1"/>
<path d="M589.3 55.5L1254.0 609" stroke="#3c3e3c" stroke-opacity="0.36" stroke-width="1"/>
<path d="M608.4 55.5L1454.1 609" stroke="#3c3e3c" stroke-opacity="0.36" stroke-width="1"/>
<path d="M627.5 55.5L1654.3 609" stroke="#3c3e3c" stroke-opacity="0.36" stroke-width="1"/>
<path d="M646.6 55.5L1854.4 609" stroke="#3c3e3c" stroke-opacity="0.36" stroke-width="1"/>
<path d="M665.8 55.5L2054.5 609" stroke="#3c3e3c" stroke-opacity="0.36" stroke-width="1"/>
<path d="M684.9 55.5L2254.6 609" stroke="#3c3e3c" stroke-opacity="0.36" stroke-width="1"/>
<path d="M704.0 55.5L2454.8 609" stroke="#2a2c2a" stroke-opacity="0.55" stroke-width="1.2"/>
<path d="M723.2 55.5L2654.9 609" stroke="#3c3e3c" stroke-opacity="0.36" stroke-width="1"/>
<path d="M742.3 55.5L2855.0 609" stroke="#3c3e3c" stroke-opacity="0.36" stroke-width="1"/>
<path d="M761.4 55.5L3055.1 609" stroke="#3c3e3c" stroke-opacity="0.36" stroke-width="1"/>
<path d="M780.6 55.5L3255.3 609" stroke="#3c3e3c" stroke-opacity="0.36" stroke-width="1"/>
<path d="M799.7 55.5L3455.4 609" stroke="#3c3e3c" stroke-opacity="0.36" stroke-width="1"/>
<path d="M818.8 55.5L3655.5 609" stroke="#3c3e3c" stroke-opacity="0.36" stroke-width="1"/>
<path d="M837.9 55.5L3855.6 609" stroke="#3c3e3c" stroke-opacity="0.36" stroke-width="1"/>
<path d="M857.1 55.5L4055.7 609" stroke="#3c3e3c" stroke-opacity="0.36" stroke-width="1"/>
<path d="M876.2 55.5L4255.9 609" stroke="#3c3e3c" stroke-opacity="0.36" stroke-width="1"/>
<path d="M895.3 55.5L4456.0 609" stroke="#2a2c2a" stroke-opacity="0.55" stroke-width="1.2"/>
<path d="M914.5 55.5L4656.1 609" stroke="#3c3e3c" stroke-opacity="0.36" stroke-width="1"/>
<path d="M933.6 55.5L4856.2 609" stroke="#3c3e3c" stroke-opacity="0.36" stroke-width="1"/>
<path d="M952.7 55.5L5056.4 609" stroke="#3c3e3c" stroke-opacity="0.36" stroke-width="1"/>
<path d="M971.8 55.5L5256.5 609" stroke="#3c3e3c" stroke-opacity="0.36" stroke-width="1"/>
<path d="M991.0 55.5L5456.6 609" stroke="#3c3e3c" stroke-opacity="0.36" stroke-width="1"/>
<path d="M1010.1 55.5L5656.7 609" stroke="#3c3e3c" stroke-opacity="0.36" stroke-width="1"/>
</g>
<path d="M0 56.0H1024" stroke="#555755" stroke-width="1.5" stroke-opacity="0.8"/>
<path d="M475 0V167" stroke="#4fb04f" stroke-width="1.3" stroke-opacity="0.85"/>
<rect x="2" y="2" width="40" height="13" fill="#9a9a9a" fill-opacity="0.55"/>
<path d="M30 573V559" stroke="#58c058" stroke-width="1.5"/><path d="M30 573H52" stroke="#d04a3a" stroke-width="1.5"/><circle cx="30" cy="566" r="2" fill="#4a7ad0"/><rect x="50" y="571" width="5" height="5" fill="#d04a3a"/>
<text x="27" y="558" font-size="8" fill="#58c058" font-family="Liberation Sans, sans-serif">Y</text>
</svg>
<div class="t" style="left:29px;top:249px;font-size:9px;color:#d8d8d8;">透视视图</div>
<div class="a" style="left:24px;top:853px;width:1024px;height:2px;background:#9c9c9c"></div>
<div class="a" style="left:30px;top:858px;width:1020px;height:20px;background:#2b2b2b"></div>
<div class="a" style="left:32px;top:860px;width:8px;height:13px;background:#2fe08a"></div>
<div class="t" style="left:40.5px;top:862px;font-size:9.5px;color:#c8c8c8;">0</div>
<div class="t" style="left:77.6px;top:862px;width:20px;text-align:center;font-size:9.500px;color:#c8c8c8">5</div>
<div class="t" style="left:130.2px;top:862px;width:20px;text-align:center;font-size:9.500px;color:#c8c8c8">10</div>
<div class="t" style="left:182.8px;top:862px;width:20px;text-align:center;font-size:9.500px;color:#c8c8c8">15</div>
<div class="t" style="left:235.4px;top:862px;width:20px;text-align:center;font-size:9.500px;color:#c8c8c8">20</div>
<div class="t" style="left:288.0px;top:862px;width:20px;text-align:center;font-size:9.500px;color:#c8c8c8">25</div>
<div class="t" style="left:340.6px;top:862px;width:20px;text-align:center;font-size:9.500px;color:#c8c8c8">30</div>
<div class="t" style="left:393.2px;top:862px;width:20px;text-align:center;font-size:9.500px;color:#c8c8c8">35</div>
<div class="t" style="left:445.8px;top:862px;width:20px;text-align:center;font-size:9.500px;color:#c8c8c8">40</div>
<div class="t" style="left:498.40000000000003px;top:862px;width:20px;text-align:center;font-size:9.500px;color:#c8c8c8">45</div>
<div class="t" style="left:551.0px;top:862px;width:20px;text-align:center;font-size:9.500px;color:#c8c8c8">50</div>
<div class="t" style="left:603.6px;top:862px;width:20px;text-align:center;font-size:9.500px;color:#c8c8c8">55</div>
<div class="t" style="left:656.2px;top:862px;width:20px;text-align:center;font-size:9.500px;color:#c8c8c8">60</div>
<div class="t" style="left:708.8000000000001px;top:862px;width:20px;text-align:center;font-size:9.500px;color:#c8c8c8">65</div>
<div class="t" style="left:761.4px;top:862px;width:20px;text-align:center;font-size:9.500px;color:#c8c8c8">70</div>
<div class="t" style="left:814.0px;top:862px;width:20px;text-align:center;font-size:9.500px;color:#c8c8c8">75</div>
<div class="t" style="left:866.6px;top:862px;width:20px;text-align:center;font-size:9.500px;color:#c8c8c8">80</div>
<div class="t" style="left:919.2px;top:862px;width:20px;text-align:center;font-size:9.500px;color:#c8c8c8">85</div>
<div class="t" style="left:971.8000000000001px;top:862px;width:20px;text-align:center;font-size:9.500px;color:#c8c8c8">90</div>
<svg class="a" style="left:30px;top:858px" width="1020" height="20"><rect x="4.5" y="14" width="1" height="4" fill="#7a7a7a"/><rect x="15.0" y="15" width="1" height="2" fill="#7a7a7a"/><rect x="25.5" y="15" width="1" height="2" fill="#7a7a7a"/><rect x="36.1" y="15" width="1" height="2" fill="#7a7a7a"/><rect x="46.6" y="15" width="1" height="2" fill="#7a7a7a"/><rect x="57.1" y="14" width="1" height="4" fill="#7a7a7a"/><rect x="67.6" y="15" width="1" height="2" fill="#7a7a7a"/><rect x="78.1" y="15" width="1" height="2" fill="#7a7a7a"/><rect x="88.7" y="15" width="1" height="2" fill="#7a7a7a"/><rect x="99.2" y="15" width="1" height="2" fill="#7a7a7a"/><rect x="109.7" y="14" width="1" height="4" fill="#7a7a7a"/><rect x="120.2" y="15" width="1" height="2" fill="#7a7a7a"/><rect x="130.7" y="15" width="1" height="2" fill="#7a7a7a"/><rect x="141.3" y="15" width="1" height="2" fill="#7a7a7a"/><rect x="151.8" y="15" width="1" height="2" fill="#7a7a7a"/><rect x="162.3" y="14" width="1" height="4" fill="#7a7a7a"/><rect x="172.8" y="15" width="1" height="2" fill="#7a7a7a"/><rect x="183.3" y="15" width="1" height="2" fill="#7a7a7a"/><rect x="193.9" y="15" width="1" height="2" fill="#7a7a7a"/><rect x="204.4" y="15" width="1" height="2" fill="#7a7a7a"/><rect x="214.9" y="14" width="1" height="4" fill="#7a7a7a"/><rect x="225.4" y="15" width="1" height="2" fill="#7a7a7a"/><rect x="235.9" y="15" width="1" height="2" fill="#7a7a7a"/><rect x="246.5" y="15" width="1" height="2" fill="#7a7a7a"/><rect x="257.0" y="15" width="1" height="2" fill="#7a7a7a"/><rect x="267.5" y="14" width="1" height="4" fill="#7a7a7a"/><rect x="278.0" y="15" width="1" height="2" fill="#7a7a7a"/><rect x="288.5" y="15" width="1" height="2" fill="#7a7a7a"/><rect x="299.1" y="15" width="1" height="2" fill="#7a7a7a"/><rect x="309.6" y="15" width="1" height="2" fill="#7a7a7a"/><rect x="320.1" y="14" width="1" height="4" fill="#7a7a7a"/><rect x="330.6" y="15" width="1" height="2" fill="#7a7a7a"/><rect x="341.1" y="15" width="1" height="2" fill="#7a7a7a"/><rect x="351.7" y="15" width="1" height="2" fill="#7a7a7a"/><rect x="362.2" y="15" width="1" height="2" fill="#7a7a7a"/><rect x="372.7" y="14" width="1" height="4" fill="#7a7a7a"/><rect x="383.2" y="15" width="1" height="2" fill="#7a7a7a"/><rect x="393.7" y="15" width="1" height="2" fill="#7a7a7a"/><rect x="404.3" y="15" width="1" height="2" fill="#7a7a7a"/><rect x="414.8" y="15" width="1" height="2" fill="#7a7a7a"/><rect x="425.3" y="14" width="1" height="4" fill="#7a7a7a"/><rect x="435.8" y="15" width="1" height="2" fill="#7a7a7a"/><rect x="446.3" y="15" width="1" height="2" fill="#7a7a7a"/><rect x="456.9" y="15" width="1" height="2" fill="#7a7a7a"/><rect x="467.4" y="15" width="1" height="2" fill="#7a7a7a"/><rect x="477.9" y="14" width="1" height="4" fill="#7a7a7a"/><rect x="488.4" y="15" width="1" height="2" fill="#7a7a7a"/><rect x="498.9" y="15" width="1" height="2" fill="#7a7a7a"/><rect x="509.5" y="15" width="1" height="2" fill="#7a7a7a"/><rect x="520.0" y="15" width="1" height="2" fill="#7a7a7a"/><rect x="530.5" y="14" width="1" height="4" fill="#7a7a7a"/><rect x="541.0" y="15" width="1" height="2" fill="#7a7a7a"/><rect x="551.5" y="15" width="1" height="2" fill="#7a7a7a"/><rect x="562.1" y="15" width="1" height="2" fill="#7a7a7a"/><rect x="572.6" y="15" width="1" height="2" fill="#7a7a7a"/><rect x="583.1" y="14" width="1" height="4" fill="#7a7a7a"/><rect x="593.6" y="15" width="1" height="2" fill="#7a7a7a"/><rect x="604.1" y="15" width="1" height="2" fill="#7a7a7a"/><rect x="614.7" y="15" width="1" height="2" fill="#7a7a7a"/><rect x="625.2" y="15" width="1" height="2" fill="#7a7a7a"/><rect x="635.7" y="14" width="1" height="4" fill="#7a7a7a"/><rect x="646.2" y="15" width="1" height="2" fill="#7a7a7a"/><rect x="656.7" y="15" width="1" height="2" fill="#7a7a7a"/><rect x="667.3" y="15" width="1" height="2" fill="#7a7a7a"/><rect x="677.8" y="15" width="1" height="2" fill="#7a7a7a"/><rect x="688.3" y="14" width="1" height="4" fill="#7a7a7a"/><rect x="698.8" y="15" width="1" height="2" fill="#7a7a7a"/><rect x="709.3" y="15" width="1" height="2" fill="#7a7a7a"/><rect x="719.9" y="15" width="1" height="2" fill="#7a7a7a"/><rect x="730.4" y="15" width="1" height="2" fill="#7a7a7a"/><rect x="740.9" y="14" width="1" height="4" fill="#7a7a7a"/><rect x="751.4" y="15" width="1" height="2" fill="#7a7a7a"/><rect x="761.9" y="15" width="1" height="2" fill="#7a7a7a"/><rect x="772.5" y="15" width="1" height="2" fill="#7a7a7a"/><rect x="783.0" y="15" width="1" height="2" fill="#7a7a7a"/><rect x="793.5" y="14" width="1" height="4" fill="#7a7a7a"/><rect x="804.0" y="15" width="1" height="2" fill="#7a7a7a"/><rect x="814.5" y="15" width="1" height="2" fill="#7a7a7a"/><rect x="825.1" y="15" width="1" height="2" fill="#7a7a7a"/><rect x="835.6" y="15" width="1" height="2" fill="#7a7a7a"/><rect x="846.1" y="14" width="1" height="4" fill="#7a7a7a"/><rect x="856.6" y="15" width="1" height="2" fill="#7a7a7a"/><rect x="867.1" y="15" width="1" height="2" fill="#7a7a7a"/><rect x="877.7" y="15" width="1" height="2" fill="#7a7a7a"/><rect x="888.2" y="15" width="1" height="2" fill="#7a7a7a"/><rect x="898.7" y="14" width="1" height="4" fill="#7a7a7a"/><rect x="909.2" y="15" width="1" height="2" fill="#7a7a7a"/><rect x="919.7" y="15" width="1" height="2" fill="#7a7a7a"/><rect x="930.3" y="15" width="1" height="2" fill="#7a7a7a"/><rect x="940.8" y="15" width="1" height="2" fill="#7a7a7a"/><rect x="951.3" y="14" width="1" height="4" fill="#7a7a7a"/><rect x="961.8" y="15" width="1" height="2" fill="#7a7a7a"/><rect x="972.3" y="15" width="1" height="2" fill="#7a7a7a"/><rect x="982.9" y="15" width="1" height="2" fill="#7a7a7a"/><rect x="993.4" y="15" width="1" height="2" fill="#7a7a7a"/><rect x="1003.9" y="14" width="1" height="4" fill="#7a7a7a"/><rect x="1014.4" y="15" width="1" height="2" fill="#7a7a7a"/></svg>
<svg class="a" style="left:25px;top:862px" width="4" height="14"><path d="M1 0V14M3 0V14" stroke="#6a6a6a" stroke-dasharray="1 1"/></svg>
<div class="a" style="left:30px;top:884px;width:55px;height:16px;background:#2c2c2c;border-radius:2px"></div>
<div class="t" style="left:35px;top:887px;font-size:9.5px;color:#b8b8b8;">0 F</div>
<div class="t" style="left:79px;top:886px;font-size:6px;color:#aaa;">▴</div>
<div class="t" style="left:79px;top:892px;font-size:6px;color:#aaa;">▾</div>
<div class="a" style="left:91px;top:884px;width:960px;height:16px;background:linear-gradient(#8a8a8a,#5a5a5a);border-radius:3px"></div>
<div class="t" style="left:95px;top:887px;font-size:7px;color:#d8d8d8;">◀</div>
<div class="t" style="left:104px;top:887px;font-size:9.5px;color:#6e6e6e;">0 F</div>
<svg class="a" style="left:25px;top:884px" width="4" height="16"><path d="M1 0V16M3 0V16" stroke="#6a6a6a" stroke-dasharray="1 1"/></svg>
<div class="a" style="left:23px;top:905px;width:775px;height:103px;background:#434343;border:1px solid #3a3a3a"></div>
<div class="a" style="left:24px;top:906px;width:773px;height:22px;background:#464646;border-bottom:1px solid #393939"></div>
<svg class="a" style="left:29px;top:912px" width="10" height="10"><path d="M1 0V10M4 0V10M7 0V10M0 1H10M0 4H10M0 7H10" stroke="#6a6a6a" stroke-width="1" stroke-dasharray="1 1"/></svg>
<div class="t" style="left:45px;top:912px;font-size:9.5px;color:#e4dc86;">创建</div>
<div class="t" style="left:75px;top:912px;font-size:9.5px;color:#8f8f8f;">编辑</div>
<div class="t" style="left:105px;top:912px;font-size:9.5px;color:#8f8f8f;">功能</div>
<div class="t" style="left:135px;top:912px;font-size:9.5px;color:#8f8f8f;">纹理</div>
<div class="a" style="left:797px;top:905px;width:254px;height:103px;background:#414141;border:1px solid #383838;border-left:1px solid #5a5a5a"></div>
<div class="a" style="left:810px;top:989px;width:68px;height:15px;background:linear-gradient(#6a6a6a,#5b5b5b);border-radius:2px"></div>
<svg class="a" style="left:868px;top:995px" width="6" height="4"><path d="M0 0H6L3 3.500Z" fill="#9a9a9a"/></svg>
<div class="a" style="left:892px;top:989px;width:68px;height:15px;background:linear-gradient(#6a6a6a,#5b5b5b);border-radius:2px"></div>
<svg class="a" style="left:950px;top:995px" width="6" height="4"><path d="M0 0H6L3 3.500Z" fill="#9a9a9a"/></svg>
<div class="t" style="left:816px;top:992px;font-size:9px;color:#8c8c8c;">世界坐标</div>
<div class="t" style="left:897px;top:992px;font-size:9px;color:#8c8c8c;">缩放比例</div>
<div class="a" style="left:976px;top:989.5px;width:68.5px;height:14px;background:linear-gradient(#767676,#686868);border-radius:7px;border:1px solid #8a8a8a"></div>
<div class="t" style="left:1001px;top:992px;font-size:9.5px;color:#f4f4f4;font-weight:bold">应用</div>
<div class="t" style="left:802px;top:971.5px;font-size:8.5px;color:#747474;font-weight:bold">Z</div>
<div class="t" style="left:814px;top:971.5px;font-size:8.5px;color:#646464;">0 cm</div>
<div class="t" style="left:884px;top:971.5px;font-size:8.5px;color:#747474;font-weight:bold">Z</div>
<div class="t" style="left:896px;top:971.5px;font-size:8.5px;color:#646464;">0 cm</div>
<div class="t" style="left:966px;top:971.5px;font-size:8.5px;color:#747474;font-weight:bold">B</div>
<div class="t" style="left:978px;top:971.5px;font-size:8.5px;color:#646464;">0 °</div>
<div class="a" style="left:0px;top:1008px;width:1051px;height:17px;background:#474747;border-top:1.500px solid #5a5a5a"></div>
<svg class="a" style="left:0px;top:1012px" width="4" height="10"><path d="M1 0V10M3 0V10" stroke="#777" stroke-dasharray="1 1"/></svg>
<div class="a" style="left:1051px;top:190px;width:522px;height:405px;background:#404040;border:1px solid #383838"></div>
<div class="a" style="left:1052px;top:191px;width:520px;height:22px;background:#454545;border-bottom:1px solid #383838"></div>
<svg class="a" style="left:1058px;top:197px" width="10" height="10"><path d="M1 0V10M4 0V10M7 0V10M0 1H10M0 4H10M0 7H10" stroke="#6a6a6a" stroke-width="1" stroke-dasharray="1 1"/></svg>
<div class="t" style="left:1074px;top:197px;font-size:9.5px;color:#8f8f8f;">文件</div>
<div class="t" style="left:1104px;top:197px;font-size:9.5px;color:#8f8f8f;">编辑</div>
<div class="t" style="left:1134px;top:197px;font-size:9.5px;color:#8f8f8f;">查看</div>
<div class="t" style="left:1164px;top:197px;font-size:9.5px;color:#8f8f8f;">对象</div>
<div class="t" style="left:1194px;top:197px;font-size:9.5px;color:#e4dc86;">标签</div>
<div class="t" style="left:1224px;top:197px;font-size:9.5px;color:#8f8f8f;">书签</div>
<svg class="a" style="left:1512px;top:194px" width="60" height="16" viewBox="0 0 60 16"><circle cx="5" cy="5" r="3" fill="none" stroke="#151515" stroke-width="1.600"/><path d="M7 7L11 13" stroke="#151515" stroke-width="2"/><path d="M23 2L29 8H27V13H19V8H17Z" fill="none" stroke="#151515" stroke-width="1.700"/><path d="M34 9H42" stroke="#5a5a5a" stroke-width="2"/><rect x="48" y="2" width="9" height="12" fill="#2a2a2a"/><path d="M50 8H55M52.500 5.500V10.500" stroke="#777" stroke-width="1"/></svg>
<div class="a" style="left:1086px;top:213px;width:1px;height:381px;background:#4a4a4a"></div>
<div class="a" style="left:1051px;top:596px;width:522px;height:429px;background:#404040;border:1px solid #383838;border-top:1px solid #5a5a5a"></div>
<div class="a" style="left:1052px;top:599px;width:520px;height:19px;background:#464646;border-bottom:1px solid #353535"></div>
<svg class="a" style="left:1450px;top:600px" width="122" height="17" viewBox="0 0 122 17"><path d="M4 8.500L16 3L13 8.500L16 14Z" fill="#0a0a0a"/><path d="M22 12L32 7" stroke="#5a5a5a" stroke-width="1.500"/><path d="M42 14L48 3L54 14" stroke="#555" stroke-width="1.300" fill="none"/><circle cx="65" cy="6" r="3" fill="none" stroke="#151515" stroke-width="1.600"/><path d="M67 8L71 14" stroke="#151515" stroke-width="2"/><rect x="80" y="8" width="8" height="7" fill="none" stroke="#1a1a1a" stroke-width="1.500"/><path d="M81.500 8V5C81.500 2 86.500 2 86.500 5" fill="none" stroke="#1a1a1a" stroke-width="1.500"/><circle cx="99" cy="9" r="5.500" fill="none" stroke="#1a1a1a" stroke-width="1.500"/><circle cx="99" cy="9" r="2" fill="none" stroke="#1a1a1a" stroke-width="1.200"/><rect x="110" y="3" width="9" height="12" fill="#2a2a2a"/><path d="M112 9H117M114.500 6.500V11.500" stroke="#777" stroke-width="1"/></svg>
<div class="a" style="left:1573px;top:190px;width:9px;height:835px;background:#3c3c3c;border-left:1px solid #555"></div>
<div class="a" style="left:1575px;top:192px;width:7px;height:21px;background:#8a7a5a"></div>
<div class="a" style="left:1575px;top:214px;width:7px;height:120px;background:#303030"></div>
<div class="a" style="left:1575px;top:599px;width:7px;height:27px;background:linear-gradient(90deg,#9a9a9a,#c9a050)"></div>
<div class="a" style="left:1575px;top:627px;width:7px;height:19px;background:#2f2f2f"></div>
<svg class="a" style="left:1369px;top:354px" width="11" height="17" viewBox="0 0 12 18"><path d="M1 1V14L4 11L6.500 16L8.500 15L6.500 10.500H10.500Z" fill="#fff" stroke="#111" stroke-width="0.8"/></svg>
<div class="a" style="left:0px;top:1025px;width:1582px;height:26px;background:#000"></div>
<div class="a" style="left:85px;top:1026px;width:30px;height:25px;background:#373a38"></div>
<svg class="a" style="left:0px;top:1031px" width="13" height="14" viewBox="0 0 13 14"><path d="M0 2L5 1.200V6.500H0ZM6 1L13 0V6.500H6ZM0 7.500H5V12.800L0 12ZM6 7.500H13V14L6 13Z" fill="#f2f2f2"/></svg>
<svg class="a" style="left:28px;top:1029px" width="150" height="22" viewBox="0 0 150 22"><path d="M3 4H8L10 6H17V15H3Z" fill="#f6cf5e"/><rect x="3" y="9" width="14" height="6" fill="#7fc0f0"/><rect x="6" y="11" width="8" height="4" fill="#fff5c8"/><circle cx="40.500" cy="9.500" r="6.500" fill="#e8b81e"/><path d="M40.500 9.500L34.500 6.500A6.500 6.500 0 0 1 46.500 6.500Z" fill="#d84a3a"/><path d="M40.500 9.500L34.800 6.500A6.500 6.500 0 0 0 40.500 16Z" fill="#3aa050"/><circle cx="40.500" cy="9.500" r="2.600" fill="#4a88e0" stroke="#fff" stroke-width=".8"/><circle cx="71.500" cy="9.500" r="7" fill="#e8eef8"/><circle cx="71.500" cy="9.500" r="4.200" fill="none" stroke="#3a6ad8" stroke-width="1.600"/><circle cx="73" cy="9.500" r="1.800" fill="#2a2a2a"/><rect x="95" y="3" width="14" height="13" fill="#2a0a00" stroke="#d0601e" stroke-width="1.200"/><text x="102" y="13" text-anchor="middle" font-size="8" font-weight="bold" fill="#f08a1e" font-family="Liberation Sans, sans-serif">Ai</text><circle cx="133" cy="9.500" r="7" fill="#1a2a6a"/><circle cx="133" cy="9.500" r="4.800" fill="#e8eef8"/><circle cx="134" cy="9" r="2.600" fill="#0a1a4a"/><path d="M-2 21H21M29 21H52M57 21H86M90 21H114M121 21H145" stroke="#b4c8e8" stroke-width="1.600"/></svg>
<div class="a" style="left:484px;top:405px;width:960px;height:574px;background:rgba(0,0,0,.28);border-radius:4px;filter:blur(3px)"></div>
<div class="a" style="left:487px;top:408px;width:952px;height:567px;background:#161c2f;overflow:hidden"></div>
<div class="a" style="left:543px;top:495px;width:694px;height:367px;background:#212b39"></div>
<div class="a" style="left:543px;top:494px;width:694px;height:2px;background:#1b2234"></div>
<div class="a" style="left:487px;top:408px;width:56px;height:439px;background:#3b4556;border-radius:0 0 11px 0"></div>
<div class="a" style="left:487px;top:893px;width:56px;height:82px;background:#3b4556;border-radius:0 11px 0 0"></div>
<div class="a" style="left:487px;top:846px;width:28px;height:48px;background:#3b4556"></div>
<div class="a" style="left:493.5px;top:848.5px;width:43px;height:43px;background:#161c2f;border-radius:50%"></div>
<div class="a" style="left:496px;top:851px;width:38px;height:38px;border-radius:50%;background:#050608;border:2px solid #cdd5e6"></div>
<svg class="a" style="left:503px;top:858px" width="24" height="24" viewBox="0 0 24 24"><path d="M5 11C5 4 19 4 19 11" fill="none" stroke="#3a3a3a" stroke-width="1.200"/><path d="M7 10V19M10.500 10V19M14 10V19M17.500 10V19" stroke="#f2f2f2" stroke-width="1.800"/></svg>
<svg class="a" style="left:495.19999999999993px;top:438.9px" width="39.2" height="39.2" viewBox="-19.6 -19.6 39.2 39.2"><circle r="18.6" fill="#2a1608"/><circle r="18.0" fill="#e0a078"/><circle r="16.04705882352941" fill="#1c0e06"/><circle r="14.223529411764707" fill="#fbfbfb"/><g transform="scale(0.912)" fill="none" stroke="#0b0b0b" stroke-linecap="round" stroke-linejoin="round"><path d="M-5.800 -9.200L-12.300 1" stroke-width="3.600"/><path d="M-7.300 -3.500L-8 10.800" stroke-width="3.400"/><path d="M3.200 -8.800L2.800 7" stroke-width="3.500"/><path d="M-2.800 -0.400V7.200H9.300" stroke-width="3.200"/><path d="M9.600 -1.200L9.200 8.400" stroke-width="3.200"/></g></svg>
<svg class="a" style="left:501px;top:528px" width="28" height="28" viewBox="0 0 28 28"><circle cx="14" cy="14" r="8.500" fill="#8e9ab0"/><ellipse cx="14" cy="14" rx="13" ry="4" fill="none" stroke="#8e9ab0" stroke-width="1.600" transform="rotate(-32 14 14)"/><circle cx="10" cy="15" r="1.200" fill="#3b4556"/></svg>
<svg class="a" style="left:501px;top:598px" width="30" height="32" viewBox="0 0 30 32"><path d="M13 7C6 7 2 12 2 17C2 21 4 24 6 25.500L5 30L10 27C20 29 24 22 24 17C24 11 19 7 13 7Z" fill="#8e9ab0"/><circle cx="9" cy="15" r="1.200" fill="#3b4556"/><circle cx="15" cy="14" r="1.200" fill="#3b4556"/><circle cx="20" cy="7" r="5.500" fill="#e8475f"/><text x="20" y="10" text-anchor="middle" font-size="8" fill="#fff" font-family="Liberation Sans, sans-serif">4</text></svg>
<svg class="a" style="left:504px;top:679px" width="22" height="22" viewBox="0 0 22 22"><rect x="1" y="2" width="20" height="18" rx="2" fill="#8e9ab0"/><path d="M1 6H21" stroke="#3b4556" stroke-width="1.200"/><path d="M6 12L10 16L16 9" fill="none" stroke="#3b4556" stroke-width="1.800"/></svg>
<svg class="a" style="left:504px;top:933px" width="22" height="22" viewBox="0 0 22 22"><circle cx="11" cy="11" r="7" fill="none" stroke="#8e9ab0" stroke-width="1.600"/><circle cx="11" cy="11" r="2.600" fill="none" stroke="#8e9ab0" stroke-width="1.500"/><g stroke="#8e9ab0" stroke-width="2.200"><path d="M11 1.500V4M11 18V20.500M2.800 6.200L5 7.500M17 14.500L19.200 15.800M2.800 15.800L5 14.500M17 7.500L19.200 6.200"/></g></svg>
<div class="a" style="left:560px;top:421px;width:23px;height:12px;background:linear-gradient(100deg,#9a5cf6,#6d3fe2);border-radius:2px"></div>
<div class="t" style="left:563.5px;top:422.5px;font-size:9px;color:#f3eaff;font-weight:bold;letter-spacing:-.3px">HD</div>
<div class="t" style="left:592.5px;top:419px;font-size:17.6px;color:#f4f6fa;letter-spacing:-.2px">【第一课】c4d的基本认识</div>
<svg class="a" style="left:812px;top:421px" width="13" height="13" viewBox="0 0 13 13"><path d="M5.500 2H1.500V11.500H11V7.500" fill="none" stroke="#b8c0d0" stroke-width="1.200"/><path d="M7.500 1.500H11.500V5.500M11.500 1.500L6 7" fill="none" stroke="#b8c0d0" stroke-width="1.200"/></svg>
<div class="t" style="left:560px;top:441.5px;font-size:10.3px;color:#4b556a;">小田仙人与他的三维创意伙伴们 (87483277)&nbsp;&nbsp;&nbsp;&nbsp; 52 人</div>
<svg class="a" style="left:1218px;top:412px" width="116" height="38" viewBox="0 0 116 38"><defs><linearGradient id="bn" x1="0" x2="1"><stop offset="0" stop-color="#9a62f6"/><stop offset=".55" stop-color="#5a3fc8"/><stop offset="1" stop-color="#2c2c86"/></linearGradient></defs><path d="M9 13H94L90 30.700H4.800Z" fill="url(#bn)"/><path d="M14 13H16.500L12.500 30.700H10Z" fill="#f0e4ff"/><path d="M87 7L91 14.500L93 8ZM95 8.500L96 15L100 10Z" fill="#f08aa0"/><path d="M92 17L109 25L102 26.500L105.500 34L100 32L97.500 28.500L93 31Z" fill="#e8405a"/><text x="52" y="26.200" text-anchor="middle" font-size="12" font-weight="bold" font-style="italic" fill="#fdecc0" stroke="#fdecc0" stroke-width=".6" font-family="Liberation Sans, sans-serif">解锁高级功能</text></svg>
<svg class="a" style="left:1350px;top:417px" width="80" height="16" viewBox="0 0 80 16" fill="none" stroke="#7d879b" stroke-width="1.300"><path d="M3 8.500H15"/><rect x="35.500" y="3.500" width="9.500" height="9.500" rx="1.500"/><path d="M66 3.500L75.500 13M75.500 3.500L66 13"/></svg>
<div class="a" style="left:555px;top:461px;width:77px;height:26.5px;background:#30384a;border-radius:13.500px"></div>
<div class="t" style="left:573px;top:469px;font-size:10.2px;color:#d6dbe6;">结束直播</div>
<div class="a" style="left:634px;top:461px;width:508px;height:26.5px;background:#2b3345;border-radius:13.500px"></div>
<div class="a" style="left:640px;top:467px;width:14.5px;height:14.5px;border-radius:50%;background:#f1f1f4"></div>
<div class="a" style="left:643px;top:470px;width:8.5px;height:8.5px;border-radius:50%;background:#e1395a"></div>
<div class="t" style="left:660px;top:469px;font-size:10.2px;color:#d8dde8;-webkit-text-stroke:.12px #d8dde8">停止</div>
<svg class="a" style="left:708px;top:467px" width="15" height="15" viewBox="0 0 15 15"><path d="M1 1H14V10.500H8L4 14V10.500H1Z" fill="#d8dde8"/><path d="M3 7.500L6 5L8.500 7L12 4" fill="none" stroke="#2b3345" stroke-width="1.300"/></svg>
<div class="t" style="left:727px;top:469px;font-size:10.2px;color:#d8dde8;-webkit-text-stroke:.12px #d8dde8">讲义库</div>
<svg class="a" style="left:770px;top:466px" width="26" height="15" viewBox="0 0 26 15"><path d="M0.500 3.500H4L5 1.500H9L10 3.500H13.500V14H0.500Z" fill="#d8dde8"/><circle cx="7" cy="8.500" r="2.600" fill="#2b3345"/><path d="M19 7H25.500L22.200 10.500Z" fill="#d8dde8"/></svg>
<div class="t" style="left:801px;top:469px;font-size:10.2px;color:#d8dde8;-webkit-text-stroke:.12px #d8dde8">摄像头</div>
<svg class="a" style="left:846px;top:467px" width="14" height="14" viewBox="0 0 14 14"><rect x=".5" y=".5" width="13" height="9.500" rx="1" fill="#d8dde8"/><path d="M4 13H10M7 10V13" stroke="#d8dde8" stroke-width="1.400"/><path d="M4.500 7C4.500 4.500 9.500 4.500 9.500 7ZM7 3.200A1.200 1.200 0 1 0 7 5.600A1.200 1.200 0 1 0 7 3.200" fill="#2b3345"/></svg>
<div class="t" style="left:864px;top:469px;font-size:10.2px;color:#d8dde8;-webkit-text-stroke:.12px #d8dde8">屏幕分享</div>
<svg class="a" style="left:916px;top:467px" width="28" height="14" viewBox="0 0 28 14"><rect x=".5" y=".5" width="13" height="11" rx="1" fill="#d8dde8"/><path d="M5 3V9L10 6Z" fill="#2b3345"/><path d="M2 13.500H12" stroke="#d8dde8" stroke-width="1"/><path d="M20 5H26.500L23.200 8.500Z" fill="#d8dde8"/></svg>
<div class="t" style="left:947px;top:469px;font-size:10.2px;color:#d8dde8;-webkit-text-stroke:.12px #d8dde8">多媒体</div>
<svg class="a" style="left:991px;top:468px" width="15" height="13" viewBox="0 0 15 13"><rect x=".5" y=".5" width="14" height="10" rx="1" fill="#d8dde8"/><rect x="8" y="7" width="5" height="2" fill="#2b3345"/><path d="M2 12.500H13" stroke="#d8dde8" stroke-width="1"/></svg>
<div class="t" style="left:1010.5px;top:469px;font-size:10.2px;color:#d8dde8;-webkit-text-stroke:.12px #d8dde8">白板</div>
<svg class="a" style="left:1044px;top:467px" width="14" height="14" viewBox="0 0 14 14"><rect x=".5" y=".5" width="13" height="13" rx="1.500" fill="#d8dde8"/><path d="M3.500 10.500L4.300 7.800L9.500 2.600L11.400 4.500L6.200 9.700Z" fill="#2b3345"/><path d="M3 12H11" stroke="#2b3345" stroke-width="1"/></svg>
<div class="t" style="left:1063px;top:469px;font-size:10.2px;color:#d8dde8;-webkit-text-stroke:.12px #d8dde8">随堂练习</div>
<div class="a" style="left:1111px;top:463px;width:5px;height:5px;border-radius:50%;background:#e8503a"></div>
<div class="a" style="left:1288px;top:462px;width:53px;height:21px;border:1px solid #7a8397;border-radius:11px"></div>
<div class="t" style="left:1299px;top:467.5px;font-size:10.2px;color:#e6e9ef;-webkit-text-stroke:.15px #e6e9ef">资料库</div>
<div class="a" style="left:1350px;top:462px;width:42px;height:21px;border:1px solid #7a8397;border-radius:11px"></div>
<div class="t" style="left:1361px;top:467.5px;font-size:10.2px;color:#e6e9ef;-webkit-text-stroke:.15px #e6e9ef">更多</div>
<svg class="a" style="left:1410px;top:462px" width="21" height="21" viewBox="0 0 21 21"><path d="M10.500 1.500L18.300 6V15L10.500 19.500L2.700 15V6Z" fill="none" stroke="#d8dde8" stroke-width="1.400" stroke-linejoin="round"/><circle cx="10.500" cy="10.500" r="2.300" fill="none" stroke="#d8dde8" stroke-width="1.300"/></svg>
<div class="t" style="left:561.5px;top:512.5px;font-size:13.5px;color:#cdd4e2;font-weight:bold;letter-spacing:.2px">CCtalk</div>
<div class="t" style="left:617px;top:515px;font-size:10px;color:#8a93a5;">.</div>
<div class="a" style="left:621px;top:507px;width:536px;height:24px;background:#0f131b;border-radius:12px"></div>
<div class="t" style="left:630px;top:513.5px;font-size:10.6px;color:#f0f2f6;-webkit-text-stroke:.12px #f0f2f6">平台有权做封号处理， 情节严重者将承担法律责任。</div>
<div class="a" style="left:1171.5px;top:517px;width:5px;height:5px;border-radius:50%;background:#e8543c"></div>
<div class="t" style="left:1183.5px;top:514.5px;font-size:10.3px;color:#e6e9ef;">00:00:00</div>
<svg class="a" style="left:818px;top:546px" width="160" height="110" viewBox="-10 -10 160 110"><defs><radialGradient id="gl" cx=".5" cy=".5" r=".5"><stop offset="0" stop-color="#8d96a4" stop-opacity=".6"/><stop offset=".45" stop-color="#6a7484" stop-opacity=".38"/><stop offset="1" stop-color="#232b39" stop-opacity="0"/></radialGradient><linearGradient id="scr" x1=".2" y1="0" x2=".6" y2="1"><stop offset="0" stop-color="#2a3240" stop-opacity=".5"/><stop offset="1" stop-color="#b4bac4" stop-opacity=".75"/></linearGradient><linearGradient id="cone" x1="0" x2="1"><stop offset="0" stop-color="#e0e4ea" stop-opacity=".75"/><stop offset="1" stop-color="#aab2be" stop-opacity=".55"/></linearGradient></defs><ellipse cx="72" cy="50" rx="66" ry="52" fill="url(#gl)"/><path d="M30 53L48 28V64L32 67Z" fill="url(#cone)"/><path d="M32 67L48 63H102V77H20Z" fill="#c8ced8" fill-opacity=".28"/><rect x="48" y="26" width="54" height="37" rx="3.500" fill="url(#scr)" stroke="#e3e6ec" stroke-width="1.500"/><rect x="69.500" y="23.500" width="10" height="6" rx="3" fill="#2a3240" stroke="#e3e6ec" stroke-width="1.400"/><path d="M74.500 63V76M74.500 68L67 77M74.500 68L82 77" stroke="#dfe3ea" stroke-width="1.300" fill="none"/><path d="M15 77H113" stroke="#c0c6d0" stroke-width="1.400"/><circle cx="24" cy="60.500" r="10" fill="#dfe2e7"/><ellipse cx="30" cy="60" rx="4" ry="7.500" fill="#c8cdd6" stroke="#5a6474" stroke-width="1"/><text x="81.500" y="58" font-size="9.800" font-weight="bold" fill="#eceef2" font-family="Liberation Sans, sans-serif">Fin</text></svg>
<div class="t" style="left:847.5px;top:652.5px;font-size:12.9px;color:#f0f2f6;">正在屏幕分享...</div>
<div class="a" style="left:710px;top:693.5px;width:14px;height:14px;border-radius:50%;background:#e9ecf1"></div>
<div class="t" style="left:714.3px;top:696.0px;font-size:9.5px;color:#333c4c;">1</div>
<div class="t" style="left:730px;top:695.5px;font-size:9.9px;color:#f2f4f7;-webkit-text-stroke:.12px #f2f4f7">开始屏幕分享后，学生将看到分享区域；你可点击<span style="display:inline-block;width:10px;text-align:right">“</span>预览<span style="display:inline-block;width:10px;text-align:left">”</span>预览分享区域</div>
<div class="a" style="left:710px;top:713.5px;width:14px;height:14px;border-radius:50%;background:#e9ecf1"></div>
<div class="t" style="left:714.3px;top:716.0px;font-size:9.5px;color:#333c4c;">2</div>
<div class="t" style="left:730px;top:715.5px;font-size:9.9px;color:#f2f4f7;-webkit-text-stroke:.12px #f2f4f7">你可利用电脑摄像头、视频播放器、PPT播放工具、双屏设备等，来辅助教学</div>
<div class="a" style="left:710px;top:733.5px;width:14px;height:14px;border-radius:50%;background:#e9ecf1"></div>
<div class="t" style="left:714.3px;top:736.0px;font-size:9.5px;color:#333c4c;">3</div>
<div class="t" style="left:730px;top:735.5px;font-size:9.9px;color:#f2f4f7;-webkit-text-stroke:.12px #f2f4f7">想要生成回顾，别忘了点击录制哦</div>
<div class="t" style="left:1051px;top:683px;font-size:16.5px;color:#5a6270;">东北之光</div>
<div class="a" style="left:765px;top:805px;width:103px;height:30.5px;border:1px solid #8e97a8;border-radius:15.500px"></div>
<div class="t" style="left:792px;top:815px;font-size:11px;color:#d9dde6;">设置/预览</div>
<div class="a" style="left:914px;top:805px;width:101px;height:30.5px;background:#1f5ff2;border-radius:15.500px"></div>
<div class="t" style="left:943px;top:815px;font-size:11px;color:#eef3ff;">结束分享</div>
<div class="a" style="left:562.2px;top:882.3px;width:41.5px;height:41.5px;border-radius:50%;background:linear-gradient(#d8402a,#c03058 55%,#6a30b8);opacity:.85"></div>
<svg class="a" style="left:559.6px;top:881.6px" width="42.8" height="42.8" viewBox="-21.4 -21.4 42.8 42.8"><circle r="20.4" fill="#2a1608"/><circle r="19.799999999999997" fill="#d8854a"/><circle r="17.599999999999998" fill="#1c0e06"/><circle r="16.5" fill="#fbfbfb"/><g transform="scale(1.000)" fill="none" stroke="#0b0b0b" stroke-linecap="round" stroke-linejoin="round"><path d="M-5.800 -9.200L-12.300 1" stroke-width="3.600"/><path d="M-7.300 -3.500L-8 10.800" stroke-width="3.400"/><path d="M3.200 -8.800L2.800 7" stroke-width="3.500"/><path d="M-2.800 -0.400V7.200H9.300" stroke-width="3.200"/><path d="M9.600 -1.200L9.200 8.400" stroke-width="3.200"/></g></svg>
<div class="t" style="left:610.5px;top:889.5px;font-size:10.3px;color:#f2f4f8;font-weight:bold">阿光</div>
<svg class="a" style="left:610px;top:908px" width="13" height="13" viewBox="0 0 13 13"><g fill="#f06a78"><circle cx="6.500" cy="3.300" r="2.800"/><circle cx="3.300" cy="5.800" r="2.800"/><circle cx="9.700" cy="5.800" r="2.800"/><circle cx="4.500" cy="9.500" r="2.800"/><circle cx="8.500" cy="9.500" r="2.800"/></g><circle cx="6.500" cy="6.800" r="1.500" fill="#ffd0c0"/></svg>
<div class="t" style="left:627.5px;top:909.5px;font-size:10.5px;color:#626c82;">1136</div>
<svg class="a" style="left:550px;top:951px" width="320" height="18" viewBox="550 951 320 18" fill="none" stroke="#566078" stroke-width="1.300"><g stroke="#f2f4f8"><path d="M553 958.500C556.500 955 561.500 955 565 958.500M555 960.800C557.500 958.500 560.500 958.500 563 960.800M557 963C558.300 962 559.700 962 561 963" stroke-width="1.500"/><circle cx="559" cy="965" r=".9" fill="#f2f4f8" stroke="none"/></g><path d="M582 957.500H584.500L588.500 954.500V965.500L584.500 962.500H582Z"/><path d="M590.500 957C592 958.500 592 961.500 590.500 963"/><rect x="613" y="953.500" width="5" height="8" rx="2.500" fill="#566078"/><path d="M611 959.500C611 965 620 965 620 959.500M615.500 963.500V966.500"/><rect x="639" y="955" width="11" height="10" rx="1.500"/><path d="M642.500 958V962M646.500 958V962"/><circle cx="672.500" cy="960" r="5.300"/><path d="M672.500 957V960.500L675 962"/><circle cx="701.500" cy="960" r="4.300"/><circle cx="701.500" cy="960" r="1.500"/><path d="M701.500 953.500V955.500M701.500 964.500V966.500M695.800 956.800L697.500 957.800M705.500 962.200L707.200 963.200M695.800 963.200L697.500 962.200M705.500 957.800L707.200 956.800" stroke-width="1.600"/><path d="M724 957.500V962.500" stroke-width="1"/><circle cx="748" cy="957.500" r="2.800"/><path d="M746 960L742.500 966"/><path d="M810.500 956H820.500V963.500H814L811.500 966V963.500H810.500Z"/><path d="M813 959.500H818"/></svg>
<div class="t" style="left:755px;top:955px;font-size:10.2px;color:#566078;">上麦模式</div>
<div class="t" style="left:824.5px;top:955px;font-size:10.2px;color:#566078;">讨论设置</div>
<div class="a" style="left:1181.5px;top:883px;width:39px;height:39px;border-radius:50%;background:#2b3347;border:1px solid #3a445a"></div>
<svg class="a" style="left:1192px;top:888px" width="18" height="28" viewBox="0 0 18 28"><circle cx="9" cy="8" r="6.500" fill="#f7c832"/><path d="M5.500 12H12.500L11.500 25C11.500 27 6.500 27 6.500 25Z" fill="#f0b41e"/><rect x="8" y="14" width="2" height="6" rx="1" fill="#fbe08a"/><ellipse cx="7" cy="5.500" rx="2" ry="1.500" fill="#fdeaa0"/></svg>
<div class="t" style="left:1191px;top:928px;font-size:10.3px;color:#e2e6ee;">下麦</div>
<div class="a" style="left:1236.5px;top:862px;width:1px;height:113px;background:#1d2438"></div>
<div class="t" style="left:1295px;top:511px;font-size:12px;color:#f2f4f8;">讨论</div>
<div class="a" style="left:1295px;top:525.5px;width:22px;height:2px;background:#f2f4f8"></div>
<div class="t" style="left:1348px;top:511px;font-size:11px;color:#505a70;">群用户</div>
<div class="a" style="left:1270px;top:534px;width:62px;height:8px;overflow:hidden"><div class="t" style="left:0;top:-4px;font-size:10.200px;color:#dfe3ea">来撞套清楚点</div></div>
<div class="a" style="left:1247px;top:567.5px;width:15.5px;height:15.5px;border-radius:50%;background:#f4f5f7"></div>
<div class="t" style="left:1270.5px;top:571.5px;font-size:10px;color:#7e889c;">豆腐花</div>
<div class="t" style="left:1270px;top:591.7px;font-size:10.75px;color:#f0f2f6;-webkit-text-stroke:.1px #f0f2f6">我看的还行吧。</div>
<svg class="a" style="left:1247px;top:627.2px" width="16" height="16" viewBox="-8 -8 16 16"><defs><clipPath id="ca2"><circle r="7.800"/></clipPath></defs><g clip-path="url(#ca2)"><rect x="-8" y="-8" width="16" height="16" fill="#f1ebe4"/><path d="M8 -3L2 1L4 8H8Z" fill="#8a2630"/><path d="M-8 3L-3 5L-4 8H-8Z" fill="#b04848"/><path d="M-2 -8L2 -4L6 -8Z" fill="#d8b0a8"/><circle cx="-1" cy="0" r="2.500" fill="#fffaf4"/></g></svg>
<div class="t" style="left:1270.5px;top:631.5px;font-size:10px;color:#7e889c;">骄傲的蜘蛛人</div>
<div class="t" style="left:1270px;top:651.7px;font-size:10.75px;color:#f0f2f6;-webkit-text-stroke:.1px #f0f2f6">有没有同学过来一起学习</div>
<svg class="a" style="left:1247px;top:687.2px" width="16" height="16" viewBox="-8 -8 16 16"><defs><clipPath id="ca3"><circle r="7.800"/></clipPath></defs><g clip-path="url(#ca3)"><rect x="-8" y="-8" width="16" height="16" fill="#c8521e"/><path d="M-8 -2C-4 -6 0 -4 -1 0C-2 4 -6 4 -8 6Z" fill="#f8e8c4"/><path d="M1 -8L8 -8V0L3 -3Z" fill="#e8a030"/><path d="M8 2L2 4L0 8H8Z" fill="#4a1810"/><circle cx="2" cy="1" r="1.800" fill="#f6d070"/></g></svg>
<div class="t" style="left:1270.5px;top:691.5px;font-size:10px;color:#7e889c;">Longe</div>
<div class="t" style="left:1270px;top:711.7px;font-size:10.75px;color:#f0f2f6;-webkit-text-stroke:.1px #f0f2f6">不过可能因为是4k屏 =w= 没事</div>
<div class="t" style="left:1270px;top:726.2px;font-size:10.75px;color:#f0f2f6;-webkit-text-stroke:.1px #f0f2f6">儿不影响学习</div>
<svg class="a" style="left:1247px;top:759px" width="16" height="16" viewBox="-8 -8 16 16"><defs><clipPath id="ca4"><circle r="7.800"/></clipPath></defs><g clip-path="url(#ca4)"><rect x="-8" y="-8" width="16" height="16" fill="#1a201e"/><path d="M-3 8L-2 0C-3 -4 1 -5 1 -1L2 8Z" fill="#c4c8c0"/><path d="M2 -6L6 -2L5 4" stroke="#4a544c" stroke-width="1.500" fill="none"/></g></svg>
<div class="t" style="left:1270.5px;top:764.5px;font-size:10px;color:#7e889c;">茶七</div>
<svg class="a" style="left:1268px;top:782px" width="75" height="70" viewBox="1268 782 75 70"><path d="M1296 796C1290 791 1293 787 1298 790C1300 786 1306 788 1303 793C1301 796 1298 797 1296 796Z" fill="#eef0fa"/><path d="M1295 836L1296 848H1315.500L1316 834Z" fill="#f6f6f2"/><path d="M1275.500 813C1273 801 1284 796 1299 795.500C1306 793 1321 792 1326 798C1333 805 1333 818 1329 826C1324 835 1312 838 1299 838C1285 838 1277 830 1275.500 813Z" fill="#fdf6de" stroke="#8c8470" stroke-width="1.800"/><g stroke="#f2ab8c" stroke-width="1.500" stroke-opacity=".85" fill="none"><path d="M1279.0 828.0L1288.0 817.0"/><path d="M1282.6 828.0L1291.6 814.0"/><path d="M1286.2 828.0L1295.2 811.0"/><path d="M1289.8 828.0L1298.8 808.0"/><path d="M1293.4 828.0L1302.4 808.0"/><path d="M1297.0 828.0L1306.0 808.0"/><path d="M1300.6 828.0L1309.6 808.0"/><path d="M1304.2 828.0L1313.2 808.0"/><path d="M1307.8 828.0L1316.8 808.0"/><path d="M1311.4 826.5L1320.4 808.0"/><path d="M1315.0 825.0L1324.0 808.0"/><path d="M1318.6 823.5L1327.6 808.0"/></g><path d="M1277.500 822C1277.500 816 1281 812 1284 812L1280 828Z" fill="#f8c0b0" fill-opacity=".7"/><path d="M1325.500 817.500L1335 816M1326 821.500L1336 822M1325 825L1334 828" stroke="#f4f2ea" stroke-width="1.500"/><path d="M1290.500 840C1288 832 1296 828 1297.500 836M1297.500 836C1296.500 828 1304.500 827 1305 836C1305 838 1303 839 1302 838" fill="#fdf6de" stroke="#7c7448" stroke-width="1.500" stroke-linecap="round"/></svg>
<div class="a" style="left:1237px;top:861.5px;width:202px;height:1px;background:#1c2336"></div>
<svg class="a" style="left:1245px;top:871px" width="110" height="22" viewBox="0 0 110 22"><g fill="#eef0f5"><circle cx="11.500" cy="6" r="3.800"/><circle cx="6.500" cy="9.500" r="3.800"/><circle cx="16.500" cy="9.500" r="3.800"/><circle cx="8.500" cy="15.300" r="3.800"/><circle cx="14.500" cy="15.300" r="3.800"/></g><circle cx="11.500" cy="11" r="1.600" fill="#161c2f"/><g fill="none" stroke="#e6e9ef" stroke-width="1.400"><circle cx="40.500" cy="11" r="7"/><path d="M37 12.500C38.500 16 42.500 16 44 12.500"/><path d="M38 8.500V9.500M43 8.500V9.500" stroke-width="1.600"/><path d="M63.500 3.500L72 14M73 3.500L64.500 14"/><circle cx="64" cy="16" r="2.300"/><circle cx="72.500" cy="16" r="2.300"/><rect x="89.500" y="4.500" width="13.500" height="12.500" rx="1.500"/><path d="M91 15L95.500 10.500L98 13L103 8"/><circle cx="93.500" cy="8" r="1" fill="#e6e9ef"/></g></svg>
</div>
<div class="a" style="left:11px;top:1099.5px;width:142px;height:39px;background:#0e0e0e"></div>
<div class="t" style="left:31px;top:1112.5px;font-size:13.7px;color:#f2f2f2;">播放倍速：0.8倍</div>
<div class="a" style="left:0px;top:1165px;width:1582px;height:47px;background:#121212"></div>
<div class="a" style="left:0px;top:1162px;width:1582px;height:3px;background:#676767"></div>
<div class="a" style="left:0px;top:1162px;width:544px;height:3px;background:#1c8ae8"></div>
<div class="a" style="left:536.5px;top:1156px;width:14px;height:14px;border-radius:50%;background:rgba(28,138,232,.35)"></div>
<div class="a" style="left:539px;top:1158.5px;width:9px;height:9px;border-radius:50%;background:#2390ee"></div>
<div class="t" style="left:10.2px;top:1185.3px;font-size:11.6px;color:#e4e4e4;">00:12:55 / 00:37:24</div>
<svg class="a" style="left:690px;top:1168px" width="210" height="44" viewBox="690 1168 210 44"><rect x="702" y="1185.300" width="10" height="10" rx="1" fill="#1e9bff"/><path d="M738 1185V1196" stroke="#1e9bff" stroke-width="2"/><path d="M748.500 1185V1196L740.500 1190.500Z" fill="#1e9bff"/><circle cx="792" cy="1190.300" r="16.600" fill="none" stroke="#1e9bff" stroke-width="2.400"/><path d="M788 1184.500V1196.500L797.800 1190.500Z" fill="#1e9bff"/><path d="M846 1185V1196" stroke="#1e9bff" stroke-width="2"/><path d="M835.500 1185V1196L843.500 1190.500Z" fill="#1e9bff"/><path d="M872 1188H875.500L880 1184.500V1196.500L875.500 1193H872Z" fill="#1e9bff"/><path d="M882.500 1187C885 1189 885 1192 882.500 1194" fill="none" stroke="#1e9bff" stroke-width="2.200"/></svg>
<svg class="a" style="left:1486px;top:1178px" width="94" height="24" viewBox="1486 1178 94 24" fill="none" stroke="#e8e8e8" stroke-width="1.250"><path d="M1502.800 1188.500V1183.700H1489.700V1196.300H1498"/><path d="M1497.600 1187.200A2.600 2.600 0 1 0 1498.800 1190.800L1503 1195.800" stroke-width="1.700"/><circle cx="1527.200" cy="1185.500" r="2.100"/><path d="M1529.500 1185.500H1538.800"/><path d="M1525 1190.500H1534.300"/><circle cx="1536.600" cy="1190.500" r="2.100"/><circle cx="1527.200" cy="1195.500" r="2.100"/><path d="M1529.500 1195.500H1538.800"/><path d="M1561.500 1187.500V1183.700H1565.300M1570.700 1183.700H1574.500V1187.500M1574.500 1192.500V1196.300H1570.700M1565.300 1196.300H1561.500V1192.500M1562 1184.200L1574 1195.800M1574 1184.200L1562 1195.800"/></svg>
<div class="a" style="left:1349px;top:872px;width:233px;height:298px;background:#444"></div>
<div class="a" style="left:1349px;top:872px;width:72px;height:298px;background:#333"></div>
<div class="a" style="left:1349px;top:892px;width:72px;height:32px;background:#0f94ff"></div>
<div class="t" style="left:1349px;top:901.5px;width:72px;text-align:center;font-size:12.300px;color:#fff">播放</div>
<div class="t" style="left:1349px;top:933.5px;width:72px;text-align:center;font-size:12.300px;color:#f0f0f0">画面</div>
<div class="t" style="left:1349px;top:965.5px;width:72px;text-align:center;font-size:12.300px;color:#f0f0f0">色彩</div>
<div class="t" style="left:1349px;top:997.5px;width:72px;text-align:center;font-size:12.300px;color:#f0f0f0">声音</div>
<div class="t" style="left:1349px;top:1029.5px;width:72px;text-align:center;font-size:12.300px;color:#f0f0f0">载入字幕</div>
<div class="t" style="left:1349px;top:1061.5px;width:72px;text-align:center;font-size:12.300px;color:#f0f0f0">字幕样式</div>
<div class="t" style="left:1437px;top:902.5px;font-size:12.3px;color:#fff;font-weight:bold;letter-spacing:.5px">快进/快退</div>
<div class="a" style="left:1437px;top:925px;width:14.5px;height:14.5px;border-radius:50%;border:1.400px solid #f4f4f4"></div>
<div class="t" style="left:1458px;top:926.5px;font-size:11.5px;color:#f2f2f2;">5秒</div>
<div class="a" style="left:1512.3px;top:925px;width:14.5px;height:14.5px;border-radius:50%;border:1.400px solid #1e9bff"></div>
<div class="a" style="left:1516.3px;top:929px;width:6.5px;height:6.5px;border-radius:50%;background:#1e9bff"></div>
<div class="t" style="left:1533.5px;top:926.5px;font-size:11.5px;color:#f2f2f2;">10秒</div>
<div class="t" style="left:1437px;top:962px;font-size:12.3px;color:#fff;font-weight:bold">倍速</div>
<div class="a" style="left:1462px;top:952.5px;width:44.5px;height:25px;background:#535353;border-radius:4px"></div>
<svg class="a" style="left:1480px;top:977px" width="8" height="4"><path d="M0 0H8L4 4Z" fill="#535353"/></svg>
<div class="t" style="left:1470px;top:959.5px;font-size:11.5px;color:#ececec;">0.8倍</div>
<div class="a" style="left:1437px;top:987px;width:145px;height:4px;background:#e9e9e9;border-radius:2px 0 0 2px"></div>
<div class="a" style="left:1437px;top:987px;width:47px;height:4px;background:#1e9bff;border-radius:2px"></div>
<div class="a" style="left:1479px;top:984px;width:10px;height:10px;border-radius:50%;background:#1e9bff"></div>
<div class="t" style="left:1437px;top:1005px;font-size:12.2px;color:#f0f0f0;">0.5倍</div>
<div class="t" style="left:1517.5px;top:1005px;font-size:12.2px;color:#f0f0f0;">1倍</div>
<div class="a" style="left:1437.5px;top:1030px;width:13px;height:13px;border:1.300px solid #f0f0f0;border-radius:2px"></div>
<div class="t" style="left:1456.5px;top:1030.3px;font-size:12.4px;color:#f2f2f2;">始终应用当前倍速</div>
</body></html>
